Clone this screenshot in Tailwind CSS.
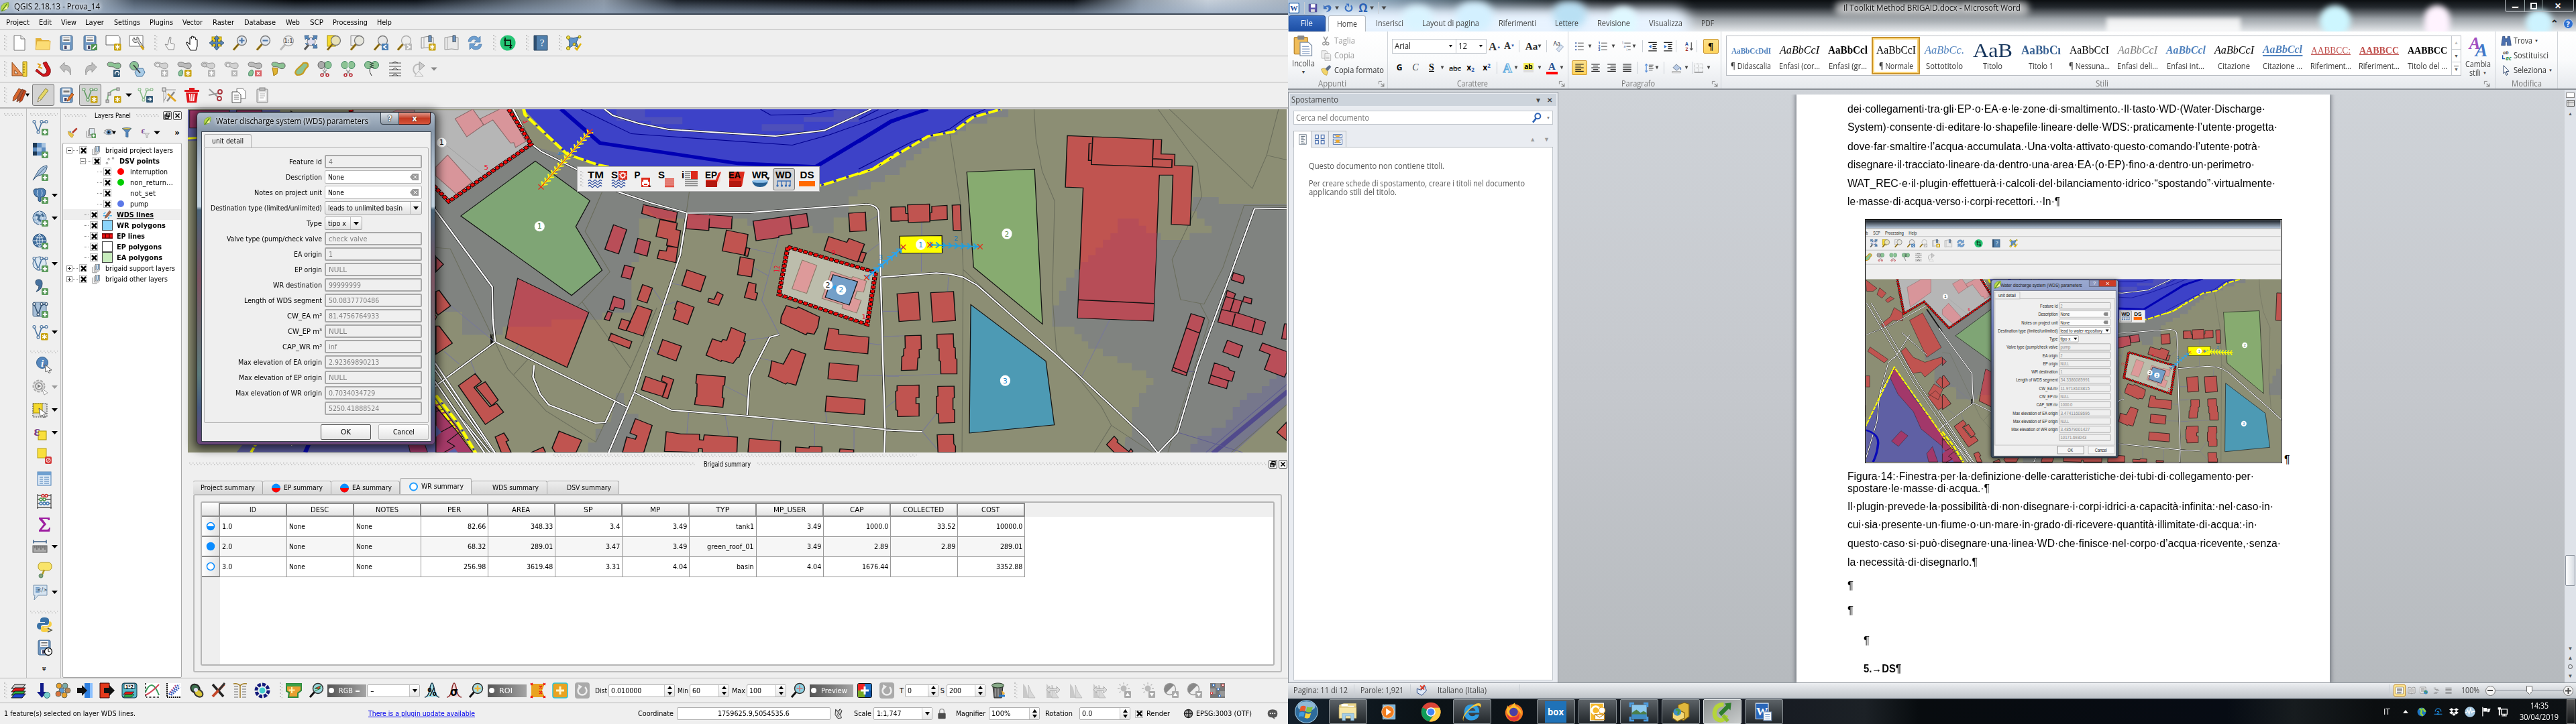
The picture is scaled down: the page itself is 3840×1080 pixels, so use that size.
<!DOCTYPE html>
<html lang="it">
<head>
<meta charset="utf-8">
<title>Desktop</title>
<script src="https://cdn.jsdelivr.net/npm/@tailwindcss/browser@4"></script>
</head>
<body class="w-[3840px] h-[1080px] overflow-hidden flex bg-[#efefef] text-black font-['DejaVu_Sans_Condensed','DejaVu_Sans',sans-serif] font-stretch-condensed text-[11px] leading-none whitespace-nowrap">

<!-- QGIS window -->
<div class="w-[1920px] h-[1080px] shrink-0 flex flex-col bg-[#efefef] overflow-hidden">
  <div class="h-[22px] shrink-0 border-b-2 border-[#3b4654] bg-[linear-gradient(90deg,#b9c5d2_0,#aebccb_130px,#4c5968_200px,#05080b_440px,#0b1016_620px,#5c6773_780px,#8b97a5_900px,#1c222a_1010px,#07090c_1300px,#0b0f14_1600px,#8e9aa7_1700px,#c7d0da_1800px,#a9b4c0_1920px)] relative">
    <div class="absolute inset-0 bg-[linear-gradient(180deg,transparent_0,rgba(150,170,195,.65)_100%)]"></div>
    <div class="relative flex items-center h-full" data-strip="q-title"></div>
  </div>
  <div class="h-[23px] shrink-0 border-b border-[#b5b5b5] flex items-center" data-strip="q-menu"></div>
  <div class="h-[39px] shrink-0 border-b border-[#b5b5b5] flex items-center" data-strip="q-tb1"></div>
  <div class="h-[39px] shrink-0 border-b border-[#b5b5b5] flex items-center" data-strip="q-tb2"></div>
  <div class="h-[39px] shrink-0 border-b-2 border-[#b5b5b5] flex items-center" data-strip="q-tb3"></div>
  <div class="h-[849px] shrink-0 flex">
    <div class="w-[40px] shrink-0 border-r border-[#bdbdbd] pt-[6px] pl-[6px]"><div class="w-[28px] h-[6px] dots"></div></div>
    <div class="w-[51px] shrink-0 border-r border-[#bdbdbd] flex flex-col" id="vbar"></div>
    <!-- layers panel -->
    <div class="w-[189px] shrink-0 flex flex-col pl-[2px]">
      <div class="h-[20px] flex items-center" data-strip="lp-title"></div>
      <div class="h-[31px] flex items-center" data-strip="lp-tools"></div>
      <div class="w-[178px] h-[798px] bg-white border border-[#a9a9a9] rounded-[2px] pt-[2px]" id="tree"></div>
    </div>
    <!-- map and summary -->
    <div class="w-[1640px] shrink-0 flex flex-col">
      <div class="h-[515px] pt-[1px] relative">
        <svg class="block w-[1638px] h-[512px]" viewBox="280 164 1638 512" id="mapsvg"></svg>
        <div class="absolute left-[580px] top-[86px] w-[362px] h-[38px] bg-[#efefef] border border-[#aaa] flex items-center" data-strip="float"></div>
        <!-- dialog -->
        <div class="absolute left-[13px] top-[5px] w-[356px] h-[497px] rounded-[6px] border border-[#20262e] shadow-[0_2px_14px_4px_rgba(0,0,0,.65)] bg-[linear-gradient(180deg,#aebccb_0,#8797a9_26px,#b9c6d3_90px,#c3d3e0_140px,#4c6579_145px,#7c5562_250px,#5c7c7c_390px,#475a80_440px,#6a4678_100%)] px-[6px] flex flex-col">
          <div class="h-[28px] shrink-0 flex items-start relative rounded-t-[5px]" data-strip="dlg-title"></div>
          <div class="h-[463px] w-[343px] bg-[#efefef] border border-[#39424c] pt-[3px] px-[3px]">
            <div class="w-[71px] h-[20px] border border-b-0 border-[#b2b2b2] rounded-t-[3px] flex items-center justify-center"><span data-w="47">unit detail</span></div>
            <div class="w-[335px] h-[411px] border border-[#b2b2b2] rounded-[2px] pt-[10px] flex flex-col gap-[3px]" id="dlgrows"></div>
            <div class="flex justify-end gap-[11px] pt-[2px]">
              <div class="w-[75px] h-[23px] rounded-[2px] border border-[#555] bg-gradient-to-b from-white to-[#e4e4e4] flex items-center justify-center"><span data-w="15">OK</span></div>
              <div class="w-[75px] h-[23px] rounded-[2px] border border-[#b5b5b5] bg-gradient-to-b from-white to-[#e4e4e4] flex items-center justify-center"><span data-w="32">Cancel</span></div>
            </div>
          </div>
        </div>
      </div>
      <div class="h-[6px] flex pl-[545px]"><div class="w-[542px] h-[5px] dots"></div></div>
      <div class="h-[18px] flex items-center" data-strip="bs-title"></div>
      <div class="h-[36px] pl-[8px] pt-[10px] flex items-end" data-tabs></div>
      <div class="ml-[8px] w-[1623px] h-[266px] border-2 border-[#bcbcbc] rounded-[3px] pt-[9px] pl-[9px]">
        <div class="w-[1601px] h-[245px] border-2 border-[#b5b5b5] rounded-[3px] bg-white" id="table"></div>
      </div>
    </div>
  </div>
  <div class="h-[38px] shrink-0 border-y border-[#b5b5b5] flex items-center" data-strip="q-bottom"></div>
  <div class="h-[31px] shrink-0 flex items-center" data-strip="q-status"></div>
</div>

<!-- Word window and taskbar -->
<div class="w-[1920px] h-[1080px] shrink-0 flex flex-col font-['Open_Sans','Noto_Sans',sans-serif] font-stretch-normal text-[12px] text-[#444]">
  <div class="h-[47px] shrink-0 relative overflow-hidden bg-[linear-gradient(180deg,#0b0e11_0,#23282d_22%,#9da3a8_60%,#e6e9ec_100%)]">
    <div class="absolute left-0 top-0 w-[470px] h-[47px] bg-[linear-gradient(90deg,#aec3dc_0,#8ba6bd_120px,rgba(120,150,170,.4)_300px,transparent)]"></div>
    <div class="absolute left-[40px] top-[12px] w-[560px] h-[50px] rounded-full bg-[#e8f3ff] blur-[9px]"></div>
    <div class="absolute left-[250px] top-[2px] w-[56px] h-[46px] rounded-full bg-[#d3f0ff] blur-[6px]"></div>
    <div class="absolute left-[395px] top-[2px] w-[50px] h-[40px] rounded-full bg-[#b9e0f4] blur-[6px]"></div>
    <div class="absolute left-[170px] top-[8px] w-[46px] h-[40px] rounded-full bg-[#d9f4ff] blur-[6px]"></div>
    <div class="absolute left-[480px] top-[10px] w-[40px] h-[46px] rounded-full bg-[#dff8ff] blur-[5px]"></div>
    <div class="absolute left-[815px] top-[2px] w-[290px] h-[21px] rounded-full bg-white/60 blur-[5px]"></div>
    <div class="absolute left-[1538px] top-[8px] w-[46px] h-[46px] rounded-full bg-[#cdf6ff] blur-[4px]"></div>
    <div class="absolute left-[1694px] top-[8px] w-[38px] h-[50px] rounded-full bg-[#fff3ff] blur-[4px]"></div>
    <div class="absolute left-[1845px] top-[14px] w-[40px] h-[40px] rounded-full bg-[#cdf3ff] blur-[4px]"></div>
    <div class="absolute left-[1220px] top-[27px] w-[200px] h-[22px] bg-white/80 blur-[3px]"></div>
    <div class="relative h-[23px] flex items-center" data-strip="w-title"></div>
    <div class="relative h-[24px] flex items-center" data-strip="w-tabs"></div>
  </div>
  <!-- ribbon -->
  <div class="h-[87px] shrink-0 bg-gradient-to-b from-white via-[#fafbfc] to-[#e6e9ed] border-b-2 border-[#8b9097] flex">
    <div class="w-[149px] border-r border-[#cfd3d8] flex flex-col">
      <div class="flex h-[71px]">
        <div class="w-[46px] flex flex-col items-center pt-[6px]"><i data-i="paste" data-s="30"></i><span class="mt-[6px]" data-w="34">Incolla</span><span class="text-[7px] mt-[3px]">▼</span></div>
        <div class="flex flex-col pt-[3px] text-[#999]">
          <div class="h-[22px] flex items-center gap-[6px] pl-[3px]"><i data-i="wcut" data-s="14"></i><span data-w="31">Taglia</span></div>
          <div class="h-[22px] flex items-center gap-[4px] pl-[3px]"><i data-i="wcopy" data-s="16"></i><span data-w="30">Copia</span></div>
          <div class="h-[22px] flex items-center gap-[4px] pl-[3px] text-[#333]"><i data-i="wbrush" data-s="16"></i><span data-w="74">Copia formato</span></div>
        </div>
      </div>
      <div class="flex items-center h-[14px] text-[#777]"><span class="ml-[45px] flex"><span data-w="42">Appunti</span></span><i class="ml-[48px]" data-i="launch" data-s="9"></i></div>
    </div>
    <div class="w-[269px] border-r border-[#cfd3d8] flex flex-col">
      <div class="h-[37px] pt-[7px] flex items-center" data-strip="w-f1"></div>
      <div class="h-[34px] flex items-center" data-strip="w-f2"></div>
      <div class="flex items-center h-[14px] text-[#777]"><span class="ml-[103px] flex"><span data-w="46">Carattere</span></span><i class="ml-[106px]" data-i="launch" data-s="9"></i></div>
    </div>
    <div class="w-[228px] border-r border-[#cfd3d8] flex flex-col">
      <div class="h-[37px] pt-[7px] flex items-center" data-strip="w-p1"></div>
      <div class="h-[34px] flex items-center" data-strip="w-p2"></div>
      <div class="flex items-center h-[14px] text-[#777]"><span class="ml-[79px] flex"><span data-w="50">Paragrafo</span></span><i class="ml-[85px]" data-i="launch" data-s="9"></i></div>
    </div>
    <div class="w-[1154px] border-r border-[#cfd3d8] flex flex-col">
      <div class="h-[71px] flex pt-[6px] pl-[7px]">
        <div class="w-[1096px] h-[60px] border border-[#b9bdc3] bg-white flex" id="styles"></div>
        <div class="w-[50px] flex flex-col items-center pt-[1px]"><i data-i="bigaa" data-s="30"></i><span class="mt-[6px]" data-w="38">Cambia</span><span class="mt-[1px] flex items-center gap-[3px]"><span data-w="17">stili</span><span class="text-[6px]">▼</span></span></div>
      </div>
      <div class="flex items-center h-[14px] text-[#777]"><span class="ml-[558px] flex"><span data-w="19">Stili</span></span><i class="ml-[560px]" data-i="launch" data-s="9"></i></div>
    </div>
    <div class="w-[93px] border-r border-[#cfd3d8] flex flex-col">
      <div class="h-[71px] pt-[3px] pl-[8px] flex flex-col text-[#333]">
        <div class="h-[22px] flex items-center gap-[3px]"><i data-i="binoc" data-s="16"></i><span data-w="28">Trova</span><span class="text-[6px]">▼</span></div>
        <div class="h-[22px] flex items-center gap-[3px]"><i data-i="repl" data-s="16"></i><span data-w="52">Sostituisci</span></div>
        <div class="h-[22px] flex items-center gap-[3px]"><i data-i="cursor" data-s="16"></i><span data-w="49">Seleziona</span><span class="text-[6px]">▼</span></div>
      </div>
      <div class="flex items-center h-[14px] text-[#777]"><span class="ml-[24px] flex"><span data-w="45">Modifica</span></span></div>
    </div>
  </div>
  <!-- workspace -->
  <div class="h-[884px] shrink-0 flex bg-gradient-to-b from-[#cfd3d8] via-[#c5c8cd] to-[#b6babe]">
    <div class="w-[403px] h-[882px] mt-[3px] bg-[#e9ecf1] border border-[#8e939a] flex flex-col px-[7px] pb-[3px]">
      <div class="-mx-[5px] h-[18px] mt-[2px] bg-[#cdd4dc] flex items-center justify-between px-[2px] shrink-0"><span data-w="70">Spostamento</span><span class="text-[10px] flex gap-[8px] pr-[4px]"><b>▼</b><b>✕</b></span></div>
      <div class="h-[21px] mt-[7px] bg-white border border-[#c3c8ce] flex items-center px-[3px] shrink-0 text-[#777]"><span data-w="109">Cerca nel documento</span><i class="ml-auto" data-i="wsearch" data-s="16"></i><span class="text-[6px] ml-[6px]">▼</span></div>
      <div class="flex mt-[9px] h-[25px] shrink-0">
        <div class="w-[27px] bg-white border border-b-0 border-[#b5bac0] flex items-center justify-center"><i data-i="n1" data-s="16"></i></div>
        <div class="w-[26px] border border-l-0 border-[#b5bac0] flex items-center justify-center"><i data-i="n2" data-s="16"></i></div>
        <div class="w-[26px] border border-l-0 border-[#b5bac0] flex items-center justify-center"><i data-i="n3" data-s="16"></i></div>
        <div class="flex-1 border-b border-[#b5bac0] flex justify-end items-center gap-[12px] pr-[5px] text-[9px] text-[#999]"><span>▲</span><span>▼</span></div>
      </div>
      <div class="flex-1 bg-white border border-t-0 border-[#c3c8ce] pl-[22px] text-[#555] flex flex-col items-start">
        <div class="pt-[22px]"><span data-w="202">Questo documento non contiene titoli.</span></div>
        <div class="pt-[14px]"><span data-w="322">Per creare schede di spostamento, creare i titoli nel documento</span></div>
        <div class="pt-[1px]"><span data-w="131">applicando stili del titolo.</span></div>
      </div>
    </div>
    <div class="w-[1500px] flex">
      <div class="ml-[355px] mt-[7px] w-[795px] h-[877px] bg-white shadow-[0_0_6px_2px_rgba(70,75,85,.6)] font-['Liberation_Sans',Arial,sans-serif] text-[16px] text-black pl-[76px] flex flex-col [clip-path:inset(0_-10px_0_-10px)]" id="doc"></div>
    </div>
    <div class="w-[17px] bg-[#dfe3e9] flex flex-col items-center justify-between text-[#555]">
      <div class="flex flex-col items-center w-full">
        <div class="h-[8px] w-[13px] mt-[4px] border border-[#888] bg-white"></div>
        <i class="mt-[2px]" data-i="ruler" data-s="12"></i>
        <span class="text-[7px] mt-[6px]">▲</span>
        <div class="w-[15px] h-[46px] mt-[655px] border border-[#8e959f] rounded-[2px] bg-gradient-to-r from-white to-[#d6dbe2]"></div>
      </div>
      <div class="flex flex-col items-center gap-[6px] pb-[6px] text-[8px]"><span>▼</span><span>▲</span><span class="size-[7px] rounded-full border border-[#555]"></span><span>▼</span></div>
    </div>
  </div>
  <div class="h-[23px] shrink-0 border-t border-[#8f959c] bg-gradient-to-b from-[#eceef1] to-[#bfc4c9] flex items-center" data-strip="w-status"></div>
  <div class="h-[39px] shrink-0 border-t-2 border-[#7e868e] bg-[linear-gradient(90deg,#14202c_0,#0b1216_200px,#161a22_700px,#1c2126_860px,#080c0f_940px,#070c14_1400px,#171c1f_1500px,#0b0e10_1620px,#0d1114)] flex items-center text-white" data-strip="task"></div>
</div>

<script>
/* ---------- icon drawings, 24 x 24 units ---------- */
const star='<rect x="13" y="13" width="10.500" height="10.500" rx="1.500" fill="#c8a10c"/><path d="M18.200 14.500v7.500M15 16.300l6.500 3.800M21.500 16.300l-6.500 3.800" stroke="#fff" stroke-width="1.500"/>';
const gstar=star.replace('#c8a10c','#b5b5b5');
const plus='<rect x="14" y="14" width="10" height="10" rx="1.500" fill="#5b9a5c"/><path d="M19 15.800v6.400M15.800 19h6.400" stroke="#fff" stroke-width="1.900"/>';
const mag=(f,s)=>`<path d="M9.500 14L2 22.500" stroke="#b58a10" stroke-width="3.400"/><path d="M9.500 14L2 22.500" stroke="#333" stroke-width="1"/><circle cx="14.500" cy="8.500" r="7" fill="${f||'#e9e9e2'}" stroke="${s||'#777'}" stroke-width="1.300"/>`;
const blob=(c,s)=>`<path d="M3 5c0-4 6-4 9-2s10-3 11 3-6 7-9 4-10 1-11-5z" fill="${c}" stroke="${s||'#666'}" stroke-width="1"/>`;
const pen='<path d="M4 22l2-7L16 2l4 3L9 19z" fill="#e5d766" stroke="#8c8440"/><path d="M4 22l2-6 3 3z" fill="#f3e3c0" stroke="#777" stroke-width=".600"/>';
const disk='<rect x="3" y="1" width="18" height="22" rx="2" fill="#6f97c1" stroke="#47698d"/><rect x="6" y="2" width="12" height="9" fill="#f2f2f2"/><path d="M7.500 4.500h9M7.500 6.500h9M7.500 8.500h9" stroke="#777"/><rect x="7" y="15" width="10" height="7" fill="#eee"/><rect x="9" y="16" width="3.500" height="5" fill="#446"/>';
const vv=c=>`<path d="M3 4l6 15 5-14 5-1" fill="none" stroke="${c}" stroke-width="1.600"/><g fill="#eee" stroke="${c}" stroke-width="1.100"><circle cx="3" cy="3.500" r="2"/><circle cx="9" cy="19" r="2"/><circle cx="14" cy="3.500" r="2"/><circle cx="21" cy="3.500" r="2"/></g>`;
const sciss='<path d="M9 13l6 7M15 13l-6 7" stroke="#999" stroke-width="1.400"/><circle cx="8" cy="21" r="2" fill="none" stroke="#b5222c" stroke-width="1.500"/><circle cx="16" cy="21" r="2" fill="none" stroke="#b5222c" stroke-width="1.500"/>';
const tx=(s,x,y,z,c,e)=>`<text x="${x}" y="${y}" font-size="${z}" fill="${c||'#000'}" text-anchor="middle" ${e||''}>${s}</text>`;
const lines=(ws,x,al)=>ws.map((w,i)=>{const l=al=='r'?22-w:al=='c'?12-w/2:x;return `<path d="M${l} ${3+i*4.200}h${w}" stroke="#222" stroke-width="1.900"/>`}).join('');
const globe=c=>`<circle cx="11" cy="11" r="10" fill="${c}" stroke="#3a5f86"/><path d="M1 11h20M11 1v20M4 5q7 4 14 0M4 17q7-4 14 0M11 1q-9 10 0 20M11 1q9 10 0 20" fill="none" stroke="#dce8f2" stroke-width="1"/>`;
const hist='<path d="M2 23V2q5 4 6 12t4 9z" fill="#c9c9c9"/><path d="M10 23V4q3 10 10 19z" fill="#d8d8d8" stroke="#aaa" stroke-width=".600"/>';
const arr2='<path d="M2 11l5-5v3.500h10V6l5 5-5 5v-3.500H7V16z" fill="#ddd" stroke="#999" stroke-width=".800"/>';
const dbadge=u=>`<rect x="13" y="13" width="10" height="10" rx="1" fill="#aaa"/><path d="${u?'M18 15l3 5h-6z':'M18 21l3-5h-6z'}" fill="#fff"/>`;
const sun='<circle cx="12" cy="9" r="4.500" fill="#bbb"/><path d="M12 0v3M3 9h3M18 9h3M5.500 2.500l2 2M18.500 2.500l-2 2M5.500 15.500l2-2" stroke="#bbb" stroke-width="1.300"/>';
const contr='<circle cx="10" cy="10" r="8.500" fill="#eee" stroke="#999" stroke-width="1.500"/><path d="M4 16a8.500 8.500 0 0 1 12-12z" fill="#888"/>';
const waves='<path d="M1 15q2-3 4 0t4 0 4 0 4 0 4 0M1 19q2-3 4 0t4 0 4 0 4 0 4 0M1 23q2-3 4 0t4 0 4 0 4 0 4 0" fill="none" stroke="#28489c" stroke-width="1.300"/>';
const lab=(s,x,l)=>`<text x="${x||12}" y="11" font-size="14" font-weight="bold" text-anchor="middle" textLength="${l}" lengthAdjust="spacingAndGlyphs" font-family="Liberation Sans,Arial,sans-serif">${s}</text>`;
const I={
leaf:'<path d="M3 22C0 10 6 2 20 1c3 10-3 18-13 20z" fill="#b8d94a" stroke="#5d8a1c"/><path d="M4 22L17 4" stroke="#4a7a1a" stroke-width="2"/><path d="M9 18l8-9 1 7z" fill="#fff8b0"/>',
neu:'<path d="M4 1h10l6 5v17H4z" fill="#fff" stroke="#777"/><path d="M14 1v5h6" fill="#eee" stroke="#777"/>',
open:'<path d="M1 5h8l2 3h10v14H1z" fill="#e3b23a"/><path d="M3 9h20l-1 13H1z" fill="#fbdc74" stroke="#d9a62e" stroke-width=".800"/>',
save:disk,saveas:disk+'<path d="M14 14h9v9h-9z" fill="#4f9350"/><path d="M16 21l5-5" stroke="#fff" stroke-width="2"/>',
comp:'<path d="M1 1h18l3 3v11H1z" fill="#fff" stroke="#666"/>'+star,
compm:'<path d="M1 1h20v16H1z" fill="#fff" stroke="#777"/><path d="M8 4a4 4 0 1 0 5 6l7 11 3-2-8-11a4 4 0 0 0-3-5l0 4-3 0z" fill="#ddd" stroke="#555"/><path d="M18 16l4 6" stroke="#d8a512" stroke-width="3"/>',
touch:'<path d="M10 22l-5-8 4 1 3-12 2 1-1 8 6 2-1 8z" fill="#f4f4f4" stroke="#888"/>',
pan:'<path d="M8 23L2 13q-1-2 1-2l4 3V5q1-2 2.500 0V3q1-2 3 0v1q2-2 3 1v2q2-1 2.500 1v9l-2 6z" fill="#fff" stroke="#222" stroke-width="1.200"/>',
panto:'<rect x="5" y="3" width="14" height="14" fill="#f2cf1d" stroke="#a98d00"/><path d="M12 1l4 5h-2.500v4.500H18V8l5 4-5 4v-2.500h-4.500V18H16l-4 5-4-5h2.500v-4.500H6V16l-5-4 5-4v2.500h4.500V6H8z" fill="#5a86b8" stroke="#24466c" stroke-width=".800"/>',
zin:mag('#e3e8ee')+'<path d="M14.500 4.500v8M10.500 8.500h8" stroke="#4d78ac" stroke-width="2.200"/>',
zout:mag('#e3e8ee')+'<path d="M10.500 8.500h8" stroke="#4d78ac" stroke-width="2.200"/>',
z11:'<path d="M9.500 14L2 22.500" stroke="#bbb" stroke-width="3"/><circle cx="14" cy="9" r="7.500" fill="#eee" stroke="#aaa" stroke-width="1.300"/>'+tx('1:1',14,12,8,'#666','font-weight="bold"'),
zfull:'<path d="M9 15L3 22" stroke="#555" stroke-width="3"/><circle cx="13" cy="10" r="6" fill="#dde" stroke="#777"/><path d="M3 1h7L8 3l3 3-2 2-3-3-2 2zM22 1h-7l2 2-3 3 2 2 3-3 2 2zM22 20h-7l2-2-3-3 2-2 3 3 2-2zM4 12l2 3 3-2" fill="#5585b8" stroke="#2c5078" stroke-width=".700"/>',
zsel:'<rect x="2" y="1" width="12" height="16" fill="#f5d92c" stroke="#a58f00"/>'+mag('#e8e2b8'),
zlay:'<path d="M2 1h13v15H2z" fill="#eee" stroke="#888"/>'+mag('#e6e6dd'),
zprev:mag('#e6e6e6')+'<rect x="13" y="13" width="10" height="10" fill="#4a7fb5"/><path d="M20 15l-4 3 4 3" stroke="#fff" stroke-width="1.800" fill="none"/>',
znext:mag('#eee','#aaa')+'<rect x="13" y="13" width="10" height="10" fill="#bbb"/><path d="M16 15l4 3-4 3" stroke="#fff" stroke-width="1.800" fill="none"/>',
bknew:'<path d="M2 4q9-3 18 0v16q-9-2-18 0z" fill="#eee" stroke="#888"/><path d="M6 3v17" stroke="#aaa"/><path d="M13 1h4v10l-2-2-2 2z" fill="#6d95c4" stroke="#345"/>'+star,
bk:'<path d="M2 4q10-3 20 0v18q-10-2-20 0z" fill="#e9e9e9" stroke="#999"/><path d="M6 3v18" stroke="#aaa"/><path d="M14 1h4v10l-2-2-2 2z" fill="#6d95c4" stroke="#345"/>',
refresh:'<path d="M2 10Q3 2 11 2q4 0 6 3l3-3v9h-9l3-3q-5-4-8 2z" fill="#6e9fd0" stroke="#4572a4" stroke-width=".700"/><path d="M22 14q-1 8-9 8-4 0-6-3l-3 3v-9h9l-3 3q5 4 8-2z" fill="#6e9fd0" stroke="#4572a4" stroke-width=".700"/>',
crop:'<circle cx="12" cy="12" r="11.500" fill="#25c574"/><path d="M8 4v12h9M6 8h10v10" stroke="#0a2b16" stroke-width="2" fill="none"/><path d="M19 16l-3-2v4zM16 21l-2-3h4z"/>',
help:'<path d="M2 1h20v22H2z" fill="#5180ad" stroke="#27435f"/><path d="M2 1h4v22H2z" fill="#2f4f70"/>'+tx('?',14,17,15,'#fff','font-family="Liberation Serif,serif"'),
cad:'<path d="M4 4l8 1 8-2-4 8 3 8-7-4-7 5 1-8z" fill="#5f93c9" stroke="#2f5780"/><g fill="#f2e04a" stroke="#8b7a00"><circle cx="4" cy="4" r="2.500"/><circle cx="21" cy="3" r="2"/><circle cx="4" cy="20" r="2.500"/><circle cx="13" cy="14" r="2"/></g><path d="M14 19l3 3 6-9" stroke="#e2b400" stroke-width="2.500" fill="none"/>',
tri:'<path d="M1 2v20h17z" fill="#e68e52" stroke="#8f4a1c"/><path d="M5 13v6h5z" fill="#efefef" stroke="#8f4a1c"/><path d="M17 1h6v22h-6z" fill="#f4d33f" stroke="#9d8412"/><path d="M17 5h3M17 9h3M17 13h3M17 17h3" stroke="#7c6a10"/>',
magnet:'<path d="M3 12l8 7q6 2 7-5L12 3l5-2 6 11q2 12-11 11L1 15z" fill="#d2161c" stroke="#7d0a0d"/><path d="M4 4l4 2-2 3 5 2" stroke="#e2a21d" stroke-width="2" fill="none"/>',
undo:'<path d="M2 9l7-7v4q12 0 9 15-1-8-9-8v4z" fill="#bdbdbd" stroke="#9c9c9c"/>',
redo:'<path d="M22 9l-7-7v4Q3 6 6 21q1-8 9-8v4z" fill="#bdbdbd" stroke="#9c9c9c"/>',
e1:blob('#8cc394')+'<rect x="12" y="13" width="10" height="11" rx="1" fill="#345b78"/><path d="M15 20a3 3 0 1 1 4 1" stroke="#fff" stroke-width="1.500" fill="none"/>',
e2:'<circle cx="8" cy="7" r="6.500" fill="#8cc394" stroke="#567"/><path d="M13 11h8l3 6-4 6h-8l-3-6z" fill="#a8cbe6" stroke="#47759e"/><path d="M7 6l10 12" stroke="#333" stroke-width="1.500"/>',
e3:blob('#d2d2d2','#999')+'<circle cx="8" cy="6" r="3" fill="#efefef" stroke="#999"/>'+gstar,
e4:blob('#bbb','#777')+'<path d="M5 22q-3-7 4-9 3 3 0 9z" fill="#8cc394" stroke="#486"/>'+star,
e5:blob('#d2d2d2','#999')+'<circle cx="8" cy="6" r="3" fill="#ccc" stroke="#999"/>'+gstar,
e6:blob('#d2d2d2','#999')+'<circle cx="8" cy="6" r="3" fill="#efefef" stroke="#999"/><rect x="13" y="14" width="9" height="9" fill="#b5b5b5"/><path d="M15.500 16.500l4 4M19.500 16.500l-4 4" stroke="#fff" stroke-width="1.500"/>',
e7:blob('#bbb','#777')+'<path d="M4 22q-2-7 5-9 3 3 0 9z" fill="#8cc394" stroke="#486"/><rect x="13" y="14" width="10" height="9" fill="#d9666a"/><path d="M16 16.500l4 4M20 16.500l-4 4" stroke="#fff" stroke-width="1.500"/>',
e8:blob('#8cc394')+'<path d="M4 10l8 1-1 8-5 3z" fill="#e0b434" stroke="#a67d12"/>',
e9:'<path d="M6 21q-6-4 1-10t8-8q8-2 7 5-4 3-6 8t-10 5z" fill="#8cc394" stroke="#c89a20" stroke-width="2.200"/>',
e10:'<ellipse cx="7" cy="6" rx="5" ry="5.500" fill="#aaa" stroke="#666"/><ellipse cx="17" cy="6" rx="5" ry="5.500" fill="#8cc394" stroke="#486"/><path d="M12 1v12" stroke="#666"/>'+sciss,
e11:'<ellipse cx="7" cy="6" rx="5" ry="5.500" fill="#8cc394" stroke="#486"/><ellipse cx="17" cy="6" rx="5" ry="5.500" fill="#8cc394" stroke="#486"/><path d="M12 1v12" stroke="#fff"/>'+sciss,
e12:'<ellipse cx="7" cy="6" rx="5.500" ry="5.500" fill="#8cc394" stroke="#486"/><ellipse cx="17" cy="6" rx="5.500" ry="5.500" fill="#8cc394" stroke="#486"/><path d="M9 2l6 2M9 5l6 2M9 8l6 2M12 9q-6 3 0 13" stroke="#333" fill="none"/>',
e13:'<path d="M3 3h18M3 8h18M3 13h18M3 18h18M3 22h18" stroke="#888" stroke-width="1.300"/><path d="M8 3l4-2 4 2M8 13l4-3 4 3M8 22l4-3 4 3" stroke="#333" fill="none"/>',
e14:'<path d="M10 21Q2 16 5 9q3-5 9-4" fill="none" stroke="#bbb" stroke-width="2"/><path d="M13 1l8 6-8 7z" fill="#ccc" stroke="#999"/><path d="M12 15l7 8H6z" fill="#eee" stroke="#bbb"/>',
pens:'<g stroke="#6b2f17" stroke-width=".800"><path d="M2 21l1-6L11 2l4 2-8 14z" fill="#d9662c"/><path d="M8 22l1-6 7-13 4 2-7 14z" fill="#a6563a"/><path d="M12 23l1-6 6-13 3 2-6 14z" fill="#c8471c"/></g>',
pen,savee:disk+'<path d="M13 21l2-5 5-7 3 2-6 8z" fill="#e57a2c" stroke="#9a4713"/>',
addf:vv('#5f9b60')+star,
curve:'<path d="M3 21Q3 4 18 3" fill="none" stroke="#86b986" stroke-width="2"/><g fill="#ccc" stroke="#777"><rect x="1" y="19" width="4" height="4"/><rect x="4" y="8" width="4" height="4"/><rect x="17" y="1" width="4" height="4"/></g>'+star,
movef:vv('#86b986')+'<rect x="13" y="13" width="10" height="10" rx="1" fill="#345b78"/><path d="M15 18h5M18 15.500l2.500 2.500-2.500 2.500" stroke="#fff" stroke-width="1.500" fill="none"/>',
node:'<path d="M4 3v20M4 4h18M6 5q4 8-2 16" stroke="#999" fill="none"/><rect x="2" y="1" width="5" height="5" fill="#ddd" stroke="#777"/><path d="M9 21L20 7" stroke="#888" stroke-width="2.500"/><path d="M10 10l12 11" stroke="#e2a724" stroke-width="3"/>',
trash:'<path d="M3 8h18l-2 15H5z" fill="#e0161b"/><path d="M1 4h22v3H1zM8 1h8v3H8z" fill="#e0161b"/><path d="M8.500 10l1 11M12 10v11M15.500 10l-1 11" stroke="#fff" stroke-width="1.700"/>',
cut:'<path d="M3 3l13 12M2 12l15-3" stroke="#999" stroke-width="2"/><circle cx="19" cy="7" r="3" fill="none" stroke="#a8343c" stroke-width="1.800"/><circle cx="18" cy="17" r="3" fill="none" stroke="#a8343c" stroke-width="1.800"/>',
copy:'<path d="M9 2h9l4 4v11H9z" fill="#fff" stroke="#777"/><path d="M2 7h9l4 4v12H2z" fill="#fff" stroke="#555"/><path d="M5 12h7M5 15h7M5 18h7" stroke="#777"/>',
pas:'<rect x="4" y="3" width="16" height="20" rx="1" fill="#ddd" stroke="#888"/><rect x="8" y="1" width="8" height="4" fill="#bbb" stroke="#888"/><path d="M7 8h10v12H7z" fill="#fff"/><path d="M8 10h8M8 13h8M8 16h6" stroke="#aaa"/>',
v1:vv('#47729f')+plus,
v2:'<path d="M1 1h19v19H1z" fill="#1e3a56"/><path d="M7 1h7v7H7zM1 8h6v6H1zM14 8h6v6h-6zM7 14h7v6H7z" fill="#5d8cc0"/><path d="M14 1h6v7h-6zM7 8h7v6H7z" fill="#a9c4e0"/>'+plus,
v3:'<path d="M1 23L9 9Q15 1 22 1q1 6-6 13l-9 3z" fill="#a9c3dd" stroke="#3a5a7b"/><path d="M2 22L20 3" stroke="#3a5a7b"/>'+plus,
v4:'<path d="M2 5q0-4 6-3 8-3 12 2 1 6-3 10l-4 0v6q-3 2-4-1v-5Q3 14 2 5z" fill="#4d7fb3" stroke="#24466a"/><path d="M8 3q-2 6 1 10M14 3q2 5 0 10" stroke="#cde" fill="none"/>'+plus,
v5:globe('#9fbcd8')+'<path d="M5 6l6 2-2 5 4 3M14 5l3 4" stroke="#456c92" stroke-width="3" fill="none"/>'+plus,v6:globe('#3e6c9c')+plus,v7:'<circle cx="11" cy="11" r="10" fill="#dce8f2" stroke="#3a5f86"/>'+vv('#47729f')+plus,
v8:'<path d="M5 5q0-4 5-4t5 6q0 9-9 12 5-5 4-9-5 0-5-5z" fill="#47729f" stroke="#2b4a6b"/>'+plus,
v9:'<rect x="1" y="1" width="20" height="21" rx="2" fill="#a8c0d8" stroke="#54708d"/>'+vv('#33506f')+plus,
v10:vv('#47729f')+star,
info:'<circle cx="9" cy="9" r="8.500" fill="#5687bd" stroke="#35618f"/>'+tx('i',9,15,15,'#fff','font-style="italic" font-weight="bold" font-family="Liberation Serif,serif"')+'<path d="M13 12l10 8-4 .500 2 3-2 1-2-3.500-3 2z" fill="#fff" stroke="#333" stroke-width=".800"/>',
gear:'<circle cx="10" cy="10" r="8.500" fill="#ddd" stroke="#aaa" stroke-width="2" stroke-dasharray="4 2"/><circle cx="10" cy="10" r="5" fill="#eee" stroke="#888" stroke-width="1.500"/><path d="M8 7l5 3-5 3z" fill="#777"/><path d="M14 13l9 7-5 3z" fill="#fff" stroke="#999"/>',
sel:'<rect x="1" y="2" width="21" height="20" fill="#ddd" stroke="#333" stroke-dasharray="2 1.500"/><rect x="2" y="2" width="13" height="14" fill="#f5d92c" stroke="#a58f00"/><path d="M10 9l11 8-4 1 2 4-2 1-2-4-3 2z" fill="#fff" stroke="#333" stroke-width=".800"/>',
eps:'<rect x="9" y="9" width="12" height="13" fill="#f9df3c" stroke="#a58f00"/>'+tx('ε',7,16,21,'#7b3f88','font-family="Liberation Serif,serif" font-weight="bold"'),
desel:'<rect x="2" y="1" width="13" height="14" fill="#f9df3c" stroke="#b89f10"/><rect x="13" y="13" width="10" height="11" rx="2" fill="#d43a3a"/><circle cx="18" cy="18.500" r="3" fill="none" stroke="#fff"/><path d="M16 20.500l4-4" stroke="#fff"/>',
tab:'<rect x="2" y="2" width="20" height="20" fill="#dce9f6" stroke="#4a7fb5"/><path d="M2 2h20v5H2z" fill="#6fa0d0"/><path d="M5 10h5M12 10h7M5 13h5M12 13h7M5 16h5M12 16h7M5 19h5M12 19h7" stroke="#4a7fb5"/>',
abac:'<path d="M2 1v22M22 1v22M2 3h20M2 9h20M2 15h20M1 21h22" stroke="#555" stroke-width="1.300" fill="none"/><g fill="#efefef" stroke-width="1.400"><g stroke="#c22"><circle cx="10" cy="3.500" r="2"/><circle cx="15" cy="3.500" r="2"/></g><g stroke="#4a9a4a"><circle cx="7" cy="9" r="2"/><circle cx="12" cy="9" r="2"/></g><g stroke="#4a7fb5"><circle cx="7" cy="15" r="2"/><circle cx="12" cy="15" r="2"/><circle cx="17" cy="15" r="2"/></g></g>',
sigma:'<path d="M4 2h16v4h-2q0-2-3-2H9l6 8-7 8h8q3 0 3-3h2l-1 6H4v-2l7-9-7-8z" fill="#9d1ca0"/>',
meas:'<path d="M2 4h19M2 1.500v5M21 1.500v5" stroke="#3a5f86" stroke-width="1.500"/><rect x="1" y="10" width="21" height="10" fill="#aaa" stroke="#555"/><path d="M4 10v4M7 10v6M10 10v4M13 10v6M16 10v4M19 10v6" stroke="#444"/>',
note:'<rect x="3" y="1" width="20" height="12" rx="5" fill="#f9e46a" stroke="#b39b22"/><path d="M12 12l-3 7" stroke="#b39b22" stroke-width="2.500"/><circle cx="7" cy="21" r="3" fill="#8aa27c" stroke="#586"/>',
html:'<path d="M2 1h20v15H9l-6 7 1-7H2z" fill="#d6e4f1" stroke="#7692ad"/><path d="M5 5h6M5 8h6M5 11h6" stroke="#4a7fb5" stroke-width="1.600"/>'+tx('&lt;/&gt;',15,11,8,'#234'),
py:'<path d="M12 1q-6 0-6 4v3h7v1H4q-3 1-3 5t4 5h2v-4q0-3 4-3h5q3 0 3-4V5q0-4-7-4z" fill="#3a72a6"/><path d="M12 23q7 0 7-4v-3h-7v-1h8q3 0 3-4t-3-4h-1v4q0 3-4 3h-5q-3 0-3 4v2q0 3 5 3z" fill="#f7cf45"/><path d="M17 17l6 3-6 3" stroke="#554" stroke-width="1.500" fill="none"/>',
dclk:disk+'<circle cx="18" cy="18" r="5.500" fill="#fff" stroke="#000" stroke-width="1.300"/><path d="M18 14v4h3" stroke="#000" fill="none"/>',
broom:'<path d="M12 12L22 2" stroke="#b5382a" stroke-width="4"/><path d="M2 9l7 3 6 5-4 6Q3 19 2 9z" fill="#e9c64b" stroke="#b8862a"/><path d="M4 8l5 1-1 3z" fill="#4d8fc7"/>',
grp:'<path d="M3 8v14h11M7 5v14h11" fill="none" stroke="#777" stroke-width="1.300"/><rect x="10" y="2" width="10" height="14" fill="#dde6ee" stroke="#666"/><path d="M13 4v9q2 3 4 0V2" stroke="#3a6a96" fill="none" stroke-width="1.500"/>',
grpa:'<path d="M3 8v14h11M7 5v14h11" fill="none" stroke="#777" stroke-width="1.300"/><rect x="10" y="2" width="10" height="14" fill="#dde6ee" stroke="#666"/>'+plus,
eye:'<path d="M1 12Q12 2 23 12 12 21 1 12z" fill="#d8e0e8" stroke="#777"/><circle cx="12" cy="11" r="5" fill="#4f7dab"/><circle cx="12" cy="11" r="2"/><path d="M2 8Q12 1 22 8" stroke="#777" fill="none" stroke-width="1.500"/>',
fun:'<path d="M2 2h20l-7 9v11l-5-1V11z" fill="#5687bd" stroke="#2c5680"/><ellipse cx="12" cy="3" rx="10" ry="2" fill="#e7c64b" stroke="#2c5680"/>',
epsf:tx('ε',8,14,20,'#7b3f88','font-family="Liberation Serif,serif" font-weight="bold"')+'<path d="M11 13h11l-4 5v5h-3v-5z" fill="#ddd" stroke="#999"/>',
b1:'<path d="M6 3h16l-5 6H1z" fill="#ccc" stroke="#111"/><path d="M6 8h16l-5 6H1z" fill="#e01b1b" stroke="#111"/><path d="M6 13h16l-5 6H1z" fill="#2fae45" stroke="#111"/><path d="M6 17h16l-5 6H1z" fill="#2046d0" stroke="#111"/>',
b2:'<path d="M9 1h5v13h4l-6.500 9L4 14h5z" fill="#101a8a"/><circle cx="19" cy="19" r="4.500" fill="#7cc" stroke="#377"/>',
b3:'<g stroke="#665"><circle cx="6" cy="5" r="4" fill="#e9a22b"/><circle cx="15" cy="5" r="4" fill="#7aa"/><circle cx="19" cy="12" r="4" fill="#b85"/><circle cx="10" cy="12" r="4" fill="#5b9bd5"/><circle cx="5" cy="17" r="4" fill="#d9733c"/><circle cx="14" cy="19" r="4" fill="#e9a22b"/></g>',
b4:'<path d="M11 1h12v22H11z" fill="#2e7fe0"/><path d="M19 1h4v22h-4z" fill="#8bc0ff"/><path d="M0 8h7V4l8 8-8 8v-4H0z" fill="#111"/>',
b5:'<path d="M1 1h14v22H1z" fill="#e5391b" stroke="#300"/><path d="M7 8h8V4l8 8-8 8v-4H7z" fill="#111"/>',
b6:'<rect x="1" y="1" width="22" height="22" rx="3" fill="#57b8c9" stroke="#134"/><rect x="4" y="2" width="16" height="7" fill="#fff" stroke="#134"/>'+tx('1*2',12,8.500,7,'#000','font-weight="bold"')+'<path d="M6 14h13l-4 4H3z" fill="#e01b1b" stroke="#111" stroke-width=".600"/><path d="M6 18h13l-4 4H3z" fill="#2fae45" stroke="#111" stroke-width=".600"/>',
b7:'<path d="M1 1h22v22H1z" fill="#fff"/><path d="M2 1v21h21" stroke="#333" stroke-dasharray="1 1" stroke-width="2" fill="none"/><path d="M2 14Q12-8 22 19" stroke="#3b9b5a" stroke-width="2" fill="none"/><path d="M2 19Q12 14 22 3" stroke="#d04a5a" stroke-width="2" fill="none"/>',
b8:'<path d="M1 1h22v22H1z" fill="#fff"/><path d="M2 1v21h21" stroke="#111" stroke-dasharray="2 1" stroke-width="2" fill="none"/><path d="M5 18L20 3M8 19L21 7" stroke="#3a5fc0" stroke-width="3" stroke-dasharray="2 1.500"/><path d="M6 15L15 4" stroke="#c34a7a" stroke-width="2" stroke-dasharray="2 2"/>',
b9:'<ellipse cx="10" cy="9" rx="7" ry="6" transform="rotate(35 10 9)" fill="#3d6e4e" stroke="#222" stroke-width="2"/><ellipse cx="15" cy="16" rx="7" ry="5" transform="rotate(35 15 16)" fill="#d9c63a" stroke="#333" stroke-width="2"/><circle cx="11" cy="11" r="3" fill="#dde"/>',
b10:'<path d="M4 3l16 18" stroke="#222" stroke-width="3.500"/><path d="M21 3L4 21" stroke="#c4482a" stroke-width="4"/><path d="M22 1l-9 11" stroke="#333" stroke-width="3"/>',
b11:'<path d="M12 4v19M2 2q7-1 10 3 3-4 10-3" stroke="#a07a20" stroke-width="1.500" fill="none"/><path d="M3 6h6M3 10h6M3 14h6M3 18h6M3 22h6M15 6h6M15 10h6M15 14h6M15 18h6M15 22h6" stroke="#999" stroke-width="1.500"/>',
b12:'<circle cx="12" cy="12" r="9" fill="none" stroke="#131a7c" stroke-width="5" stroke-dasharray="5 2"/><circle cx="12" cy="12" r="5" fill="#4cc" stroke="#e8ffff"/>',
b13:'<path d="M1 2h22v10l-5 4v6H4l1-7-4-2z" fill="#e9a032" stroke="#2c8a3c" stroke-width="2"/><path d="M1 2h22v4H1z" fill="#3aa04a"/><path d="M9 7v9M4.500 11.500h9" stroke="#fff4b0" stroke-width="2"/>',
b14:'<path d="M9 14L2 22" stroke="#111" stroke-width="3"/><circle cx="14" cy="9" r="7.500" fill="#9bd7dc" stroke="#333" stroke-width="1.500"/><path d="M9 9l9-4-2 5zM9 13l9-4" fill="#e33" stroke="#273"/>',
b15:'<path d="M1 22Q7 22 9 8q3-14 6 0 2 14 8 14" fill="#a8e0ea" stroke="#134" stroke-width="1.500"/>'+tx('%',12,20,15,'#000','font-weight="bold"'),
b16:'<path d="M1 22Q7 22 9 8q3-14 6 0 2 14 8 14" fill="#f1dada" stroke="#822" stroke-width="1.500"/>'+tx('σ',12,20,17,'#000','font-weight="bold"'),
b17:'<path d="M9 14L2 22" stroke="#111" stroke-width="3"/><circle cx="14" cy="9" r="7.500" fill="#a8dfe4" stroke="#333" stroke-width="1.500"/><path d="M14 4.500v9M9.500 9h9" stroke="#f2b53c" stroke-width="2.500"/>',
b18:'<path d="M2 2h20l-4 10 4 10H2z" fill="#e9a321"/><g stroke="#e11" stroke-width="1.500"><path d="M1 1l3 3M4 1L1 4M20 1l3 3M23 1l-3 3M1 20l3 3M4 20l-3 3M20 20l3 3M23 20l-3 3M14 5l4 4M18 5l-4 4M14 13l4 4M18 13l-4 4"/></g>',
b19:'<rect x="1" y="1" width="22" height="22" rx="3" fill="#e9a321" stroke="#2bc3d8" stroke-width="1.500"/><path d="M12 6v12M6 12h12" stroke="#fff4c8" stroke-width="3"/>',
b20:'<rect x="1" y="0" width="22" height="24" rx="4" fill="#aaa"/><path d="M16 7a6.500 6.500 0 1 1-8 0" stroke="#eee" stroke-width="2.500" fill="none"/><path d="M6 3l6 3-5 5z" fill="#eee"/>',
b21:'<rect x="1" y="1" width="22" height="22" rx="3" fill="#111"/><path d="M2 2h10v10H2z" fill="#e22"/><path d="M12 2h10v10H12z" fill="#27c"/><path d="M2 12h10v10H2z" fill="#7a2"/><path d="M12 12h10v10H12z" fill="#15a"/><path d="M12 6v12M6 12h12" stroke="#fff" stroke-width="3"/>',
b22:'<path d="M4 6h15l-2 17H6z" fill="#666" stroke="#222"/><ellipse cx="11.500" cy="4.500" rx="9" ry="3.500" fill="#8a8" stroke="#232"/><path d="M8 9v12M12 9v12" stroke="#bbb"/><path d="M17 12l5 4-3 4z" fill="#f2b53c"/><path d="M13 20h9" stroke="#27c" stroke-width="3"/>',
b23:'<path d="M9 14L2 22" stroke="#111" stroke-width="3"/><circle cx="14" cy="9" r="7.500" fill="#8fd3e4" stroke="#333" stroke-width="1.500"/><path d="M14 4.500v9M9.500 9h9" stroke="#c77" stroke-width="1.500"/>',
h1:hist,h2:hist+arr2,h3:hist,h4:hist+arr2,h5:sun+dbadge(1),h6:sun+dbadge(0),h7:contr+dbadge(1),h8:contr+dbadge(0),
h9:'<path d="M1 1h22v22H1z" fill="#777"/><path d="M9 1h7v7H9zM1 9h8v8H1zM15 13h8v8h-8z" fill="#999"/><g fill="#fff" stroke="#37c" stroke-width="1"><circle cx="6" cy="4" r="1.700"/><circle cx="13" cy="10" r="1.700"/><circle cx="15" cy="20" r="1.700"/></g><g fill="#fff" stroke="#d22"><circle cx="20" cy="4" r="1.700"/><circle cx="3" cy="16" r="1.700"/></g>',
mouse:'<path d="M4 2l5 4 5-5 4 4-3 8 2 8-8 1-6-8z" fill="#ddd" stroke="#222" stroke-width="1.300"/><path d="M4 2l10 12M14 1l-8 17M18 5L8 20" stroke="#222"/>',
lock:'<path d="M7 11V6q0-5 5-5t5 5v5" fill="none" stroke="#999" stroke-width="2"/><rect x="3.500" y="10" width="17" height="13" rx="2" fill="#4b4b4b"/>',
proj:'<circle cx="12" cy="12" r="9.500" fill="#bbb" stroke="#222" stroke-width="2.500"/><path d="M2 12h20M12 2v20M12 2q-9 10 0 20M12 2q9 10 0 20" fill="none" stroke="#222" stroke-width="1.500"/>',
msg:'<path d="M12 2q11 0 11 9t-7 9l1 4-6-4Q1 20 1 11t11-9z" fill="#555"/><circle cx="7" cy="11" r="1.500" fill="#fff"/><circle cx="12" cy="11" r="1.500" fill="#fff"/><circle cx="17" cy="11" r="1.500" fill="#fff"/>',
f1:lab('TM',12,24)+waves,f2:lab('S',5,10)+'<rect x="11" y="0" width="13" height="13" fill="#dd2b1c"/><circle cx="17.500" cy="6.500" r="3.300" fill="none" stroke="#fff" stroke-width="1.800"/><circle cx="17.500" cy="6.500" r="5" fill="none" stroke="#fff" stroke-dasharray="1.500 2.400"/>'+waves,
f3:lab('P',4,9)+'<rect x="10" y="10" width="13" height="14" fill="#dd2b1c"/><path d="M13 13h7v3h2v5h-2v2h-7v-2h-2v-5h2z" fill="#fff"/><path d="M14 19h5v2h-5z" fill="#dd2b1c"/><path d="M21 22h4l-2 2z"/>',
f4:lab('S',5,10)+'<path d="M10 12h14M10 15h14M10 18h14M10 21h14M10 23.500h14" stroke="#dd2b1c" stroke-width="1.500"/>',
f5:lab('i',2,4)+'<path d="M5 1h19M5 4h8M5 7h8M5 10h8M5 13h19M5 16h19M5 19h19M5 22h19" stroke="#777" stroke-width="1.700"/><rect x="14" y="0" width="10" height="12" fill="#dd2b1c"/>',
f6:'<path d="M1 17l18 0 5-16-4 2-4 10H1z" fill="#dd2b1c"/><path d="M1 15h17v9H1z" fill="#b3180f"/><path d="M18 17l5-12v10l-5 9z" fill="#f2d9d4"/>'+lab('EP',9,18),
f7:'<path d="M3 1h21l-4 22H1V14z" fill="#dd2b1c"/><path d="M1 15h18v9H1z" fill="#b3180f"/>'+lab('EA',9,18),
f8:lab('WR',12,24)+'<path d="M0 15h24q-2 9-12 9T0 15z" fill="#276092"/><ellipse cx="12" cy="15.500" rx="12" ry="2.300" fill="#8fc1ea"/>',
f9:lab('WD',12,24)+'<path d="M3 22v-7h20M9 22v-7M16 22v-7M22 15v7" stroke="#3b6fb5" fill="none" stroke-width="1.300"/><g fill="#3b6fb5"><circle cx="3" cy="22" r="1.700"/><circle cx="9.500" cy="22" r="1.700"/><circle cx="15.500" cy="22" r="1.700"/><circle cx="21" cy="22" r="1.700"/></g>',
f10:lab('DS',12,21)+'<path d="M0 15h24v8H0z" fill="#ff6a00"/>',
wW:'<rect x="1" y="1" width="22" height="22" rx="2" fill="#fff" stroke="#1e5fae" stroke-width="2"/>'+tx('W',12,18,17,'#1e4f9e','font-weight="bold" font-family="Liberation Serif,serif"'),
wsave:'<path d="M2 2h20v20H4l-2-2z" fill="#5b52ad" stroke="#2f2a73"/><path d="M7 2h11v9H7z" fill="#fff"/><path d="M7 15h10v7H7z" fill="#ddd"/>',
wundo:'<path d="M2 5v9h9l-4-3q8-5 8 2 0 5-6 9 12-2 12-11Q19 1 5 8z" fill="#3b72c4" stroke="#2450a0" stroke-width=".600"/>',
wredo:'<path d="M6 6a9 9 0 1 0 12 0" fill="none" stroke="#3b72c4" stroke-width="4"/><path d="M4 1h9v9z" fill="#3b72c4"/>',
paste:'<rect x="1" y="2" width="16" height="20" rx="1" fill="#f0bd5a" stroke="#b5822c"/><rect x="5" y="0" width="8" height="5" rx="1" fill="#888"/><path d="M8 8h10l4 4v12H8z" fill="#fff" stroke="#7d8fa6"/><path d="M10.500 13h8M10.500 16h9M10.500 19h9M10.500 21.500h9" stroke="#8ca4c8"/>',
wcut:'<path d="M7 1l7 14M17 1l-7 14" stroke="#999" stroke-width="2.500"/><circle cx="8" cy="19" r="3.500" fill="none" stroke="#999" stroke-width="2"/><circle cx="17" cy="19" r="3.500" fill="none" stroke="#999" stroke-width="2"/>',
wcopy:'<path d="M2 1h10l3 3v14H2z" fill="#eee" stroke="#999"/><path d="M9 7h10l3 3v13H9z" fill="#f6f6f6" stroke="#999"/><path d="M11 13h8M11 16h8M11 19h8" stroke="#aaa"/>',
wbrush:'<path d="M1 9l7-2 8 8-3 8Q4 22 1 9z" fill="#f2d46a" stroke="#b08d2a"/><path d="M10 8l9-8 4 4-8 10z" fill="#5f6f86"/>',
launch:'<path d="M1 12V1h12" stroke="#888" stroke-width="2.500" fill="none"/><path d="M10 10l10 10M21 9v12H9" stroke="#888" stroke-width="3" fill="none"/>',
erase:tx('Aa',9,10,12,'#334')+'<path d="M8 18l9-9 5 4-9 10z" fill="#dbe5f2" stroke="#6f87a8"/>',
bul:'<g fill="#2a4f9a"><rect x="2" y="2" width="3" height="3"/><rect x="2" y="10" width="3" height="3"/><rect x="2" y="18" width="3" height="3"/></g><path d="M8 3.500h14M8 11.500h14M8 19.500h14" stroke="#444" stroke-width="1.500"/>',
num:tx('1',3,7,8,'#2a4f9a','font-weight="bold"')+tx('2',3,15,8,'#2a4f9a','font-weight="bold"')+tx('3',3,23,8,'#2a4f9a','font-weight="bold"')+'<path d="M8 3.500h14M8 11.500h14M8 19.500h14" stroke="#444" stroke-width="1.500"/>',
ml:tx('1',3,7,8,'#2a4f9a')+tx('a',8,15,8,'#2a4f9a')+tx('i',13,23,8,'#2a4f9a')+'<path d="M7 3.500h15M12 11.500h10M16 19.500h6" stroke="#444" stroke-width="1.500"/>',
ind:'<path d="M2 2h20M12 7h10M12 12h8M12 17h10M2 22h20" stroke="#222" stroke-width="2"/><path d="M9 8l-6 4 6 4z" fill="#2a6fd0"/>',
ind2:'<path d="M2 2h20M12 7h10M12 12h8M12 17h10M2 22h20" stroke="#222" stroke-width="2"/><path d="M3 8l6 4-6 4z" fill="#2a6fd0"/>',
az:tx('A',7,10,11,'#2a4f9a','font-weight="bold"')+tx('Z',7,23,11,'#a02a2a','font-weight="bold"')+'<path d="M18 2v18M14.500 16l3.500 5 3.500-5" stroke="#222" stroke-width="1.500" fill="none"/>',
al:lines([20,14,20,14,20],2),ac:lines([20,12,20,12,20],2,'c'),ar:lines([20,13,20,13,20],2,'r'),aj:lines([20,20,20,20,20],2),
lsp:'<path d="M5 2v20M2 6l3-4 3 4M2 18l3 4 3-4" stroke="#2a6fd0" fill="none" stroke-width="1.500"/><path d="M11 5h11M11 9h9M11 13h11M11 17h9" stroke="#444" stroke-width="1.500"/>',
buck:'<path d="M3 11l8-8 9 8-8 7z" fill="#b9cbe6" stroke="#456"/><path d="M20 10q3 4 1 6" stroke="#36b" fill="none" stroke-width="2"/><path d="M1 20h20v3.500H1z" fill="#fff" stroke="#888"/>',
bord:'<path d="M2 2h19v19M2 2v19M11.500 2v19M2 11.500h19" stroke="#777" stroke-dasharray="1.500 1.500" fill="none"/><path d="M1 22h21" stroke="#333" stroke-width="1.500"/>',
bigaa:tx('A',8,15,20,'#a04fc0','font-weight="bold" font-family="Liberation Serif,serif"')+tx('A',16,24,22,'#3f78c9','font-weight="bold" font-family="Liberation Serif,serif"'),
binoc:'<path d="M4 2h5v5h6V2h5l3 20h-9v-8h-4v8H1z" fill="#4a6fae" stroke="#1f3b6d"/>',
repl:tx('ab',11,9,11,'#555','font-weight="bold"')+tx('ac',17,23,12,'#2c8a3c','font-weight="bold"')+'<path d="M4 11v8h5" stroke="#25a" stroke-width="2" fill="none"/>',
cursor:'<path d="M6 1l12 13-6 .500 3 7-3 1.500-3-8-3 4z" fill="#fff" stroke="#334a70" stroke-width="1.500"/>',
wsearch:'<circle cx="14" cy="8" r="6" fill="none" stroke="#2c62b5" stroke-width="3"/><path d="M10 13L3 22" stroke="#2c62b5" stroke-width="4"/>',
n1:'<path d="M4 1h16v22H4z" fill="#fff" stroke="#456"/><path d="M8 5h9M8 9h6M8 13h9M8 17h6M8 20h9" stroke="#456" stroke-width="1.500"/>',
n2:'<g fill="#fff" stroke="#4a6fae" stroke-width="1.800"><path d="M1 2h7v8H1zM14 2h7v8h-7zM1 14h7v8H1zM14 14h7v8h-7z"/></g>',
n3:'<path d="M2 1h20v7H2zM2 11h20v12H2z" fill="#fff" stroke="#4a6fae" stroke-width="1.500"/><path d="M5 4h14M5 15h14M5 19h14" stroke="#678" stroke-width="1.500"/><path d="M8 2.500h8v3.500H8zM8 13h8v6H8z" fill="#f0a92c"/>',
ruler:'<path d="M1 3h22v18H1z" fill="#ddd" stroke="#555" stroke-width="2"/><path d="M6 3v18M1 9h22" stroke="#555"/>',
book:'<path d="M2 8l9 3 9-8 3 9-10 11L2 17z" fill="#dfe8f5" stroke="#2d4d86" stroke-width="1.500"/><path d="M9 1l9 9M19 0l-9 10" stroke="#e2341d" stroke-width="3"/>',
s1:'<path d="M1 2h22v20H1z" fill="#fff" stroke="#555"/><path d="M4 6h16M4 9.500h16M4 13h16M4 16.500h16M4 19.500h12" stroke="#444" stroke-width="1.400"/>',
s2:'<path d="M2 3q6-2 10 2 4-4 10-2v17q-6-1-10 2-4-3-10-2z" fill="#f4f4f4" stroke="#555"/><path d="M12 5v17M4 8h6M4 12h6M4 16h6M14 8h6M14 12h6M14 16h6" stroke="#666" stroke-width="1.300"/>',
s3:'<path d="M1 2h17v18H1z" fill="#f4f4f4" stroke="#555"/><path d="M4 6h11M4 10h11M4 14h8" stroke="#555" stroke-width="1.400"/><circle cx="18" cy="17" r="6" fill="#3f8fc4"/><path d="M14 15q4-3 5 1t3 2" stroke="#4a9a4a" stroke-width="3" fill="none"/>',
s4:'<path d="M2 3h8M6 8h12M10 13h12M6 18h12M2 22h12" stroke="#777" stroke-width="1.700"/>',s5:'<path d="M1 3h22M1 8h22M1 13h22M1 18h22M1 22h22" stroke="#666" stroke-width="1.700"/>',
win:'<circle cx="12" cy="12" r="11.500" fill="#2e6b9c" stroke="#9fc6df" stroke-width=".700"/><ellipse cx="12" cy="6.500" rx="9" ry="5" fill="#8fb9d6"/><path d="M6 7q3-2 5.500 0l-1 5q-2.500-1.500-5.500 0z" fill="#e8592b"/><path d="M12.500 7q3 1.500 6 0l-1.500 5q-2.500 1.500-5.500 0z" fill="#85c440"/><path d="M4.700 13q3-1.500 5.500 0l-1.200 4.500q-2.500-1.500-5 0z" fill="#3f9be0"/><path d="M11.200 13.500q3 1.500 5.500 0l-1.500 4.700q-2.500 1.500-5.200 0z" fill="#fbd03a"/>',
fold:'<path d="M1 3l6-2h16v16H1z" fill="#e9d48a"/><path d="M4 2h8v3H4zM8 4h12v3" fill="#fff"/><path d="M1 6h22v14H1z" fill="#f7e6a6" stroke="#c5a955" stroke-width=".600"/><path d="M5 23v-9h15v9h-4v-6H9v6z" fill="#a4cde8" stroke="#6b9fc2" stroke-width=".500"/>',
wmp:'<path d="M7 2h14v20H7zM4 2h2v20H4z" fill="#79b5dc" stroke="#d6eefc" stroke-width=".600"/><circle cx="11" cy="12" r="8.500" fill="#f07c1e" stroke="#fbc79a"/><path d="M8.500 7l7 5-7 5z" fill="#fff"/>',
chrome:'<circle cx="12" cy="12" r="11.500" fill="#db4437"/><path d="M12 12L2 6.500A11.500 11.500 0 0 0 10 23.300l5-8z" fill="#0f9d58"/><path d="M12 7h10.500A11.500 11.500 0 0 1 10 23.300l6.500-9z" fill="#ffcd40"/><circle cx="12" cy="12" r="5.500" fill="#fff"/><circle cx="12" cy="12" r="4.300" fill="#4285f4"/>',
ie:'<path d="M12 3q9 0 9 10H8q1 4 4.500 4 3 0 4-2H21q-2 7-9 7-9 0-9-9.500T12 3zm0 4q-3 0-4 3.500h8.500Q15 7 12 7z" fill="#2f9de2"/><path d="M2 23Q-1 18 8 9T22 2q2 2 0 5 0-4-6-2-5 2-10 8-5 6-4 10z" fill="#f7c83c"/>',
fox:'<circle cx="12" cy="13" r="10.500" fill="#f4771f"/><path d="M4 4q1 3 3 3 4-5 6-6 0 4 3 5 6 4 5 10-3-7-8-7-5 1-5 5t5 5q-9 2-10-6z" fill="#fdbb2d"/><circle cx="11.500" cy="12" r="5" fill="#4a3fa5"/><path d="M3 12q3 8 10 6 4-1 5-5 2 9-7 10Q4 22 3 12z" fill="#e0343c"/>',
boxi:'<path d="M0 0h24v24H0z" fill="#1f72b8"/>'+tx('box',12,15.500,10,'#fff','font-weight="bold" textLength="18" lengthAdjust="spacingAndGlyphs"'),
outl:'<path d="M3 1h17v22H3z" fill="#f7b92d" stroke="#fff"/><circle cx="10" cy="10" r="5" fill="none" stroke="#fff" stroke-width="2.600"/><circle cx="18" cy="10" r="4" fill="#fff" stroke="#e8a21c"/><path d="M9 15h12v7H9z" fill="#fff" stroke="#d18f18"/><path d="M9 15l6 4 6-4" fill="none" stroke="#d18f18"/>',
pict:'<path d="M3 3h19v18H3z" fill="#8cc8ee"/><path d="M3 13l6-4 5 4 4-2 4 2v4H3z" fill="#4d7f4a"/><path d="M3 15h19v6H3z" fill="#3f8cc4"/><path d="M1 6V1h5M18 1h5v5M23 18v5h-5M6 23H1v-5" stroke="#4a9be0" stroke-width="2.500" fill="none"/>',
cab:'<path d="M9 3l8-3 6 2v16l-7 5-7-3z" fill="#e0b73c" stroke="#7d5f10"/><path d="M2 13l9-3 6 3v7l-9 4-6-4z" fill="#f4da7a" stroke="#7d5f10"/><circle cx="8" cy="12" r="5" fill="#3f8fc4"/><path d="M6 9l4 1-1 5" stroke="#4a9a4a" stroke-width="2.500" fill="none"/>',
qg:'<path d="M14 3Q4 3 3 13q0 8 7 9 5 0 7-6" fill="none" stroke="#b5d43b" stroke-width="5"/><path d="M8 13L17 4l-2-2 8-1-1 9-2-2-9 9z" fill="#2f7d2c"/><path d="M13 16l6 7" stroke="#8fbf2d" stroke-width="4"/>',
wd:'<path d="M2 1h16v20H2z" fill="#2a66b8" stroke="#d6e6fa"/>'+tx('W',10,16,15,'#fff','font-weight="bold" font-family="Liberation Serif,serif"')+'<path d="M12 12h10v11H12z" fill="#fff" stroke="#7a93b8"/><path d="M14 15h6M14 18h6M14 21h6" stroke="#5a83c0"/>',
t1:'<circle cx="12" cy="12" r="11" fill="#1d75c2"/><path d="M6 4q8 2 5 8t5 9M14 3q6 5 7 9" stroke="#8fd13a" stroke-width="4.500" fill="none"/>',
t2:'<path d="M4 12a8 8 0 0 1 16 0" stroke="#1c86d8" stroke-width="2.500" fill="none"/><path d="M1 19h22" stroke="#1c86d8" stroke-width="2"/>'+tx('2',12,21,14,'#1c9bf0','font-weight="bold"'),
t3:'<path d="M6 2l6 4-6 4-6-4zM18 2l6 4-6 4-6-4zM6 10l6 4-6 4-6-4zM18 10l6 4-6 4-6-4zM12 15l5 4-5 3-5-3z" fill="#fff"/>',
t4:'<circle cx="12" cy="12" r="11.500" fill="#a9cbe4"/><path d="M1 13h4l2-5 3 9 3-12 3 9 2-3h5" stroke="#fff" stroke-width="1.700" fill="none"/>',
t5:'<path d="M3 1v22" stroke="#fff" stroke-width="2"/><path d="M5 3h8v9H5zM14 5h8l-2 4q0 5-6 4z" fill="#fff"/>',
t6:'<path d="M9 6h14v12H9z" fill="none" stroke="#fff" stroke-width="2"/><path d="M10 22h12M16 18v4" stroke="#fff" stroke-width="2"/><path d="M1 2h7v5H6v14H3V7H1z" fill="#fff"/>'
};
const ic=(n,s=24)=>`<svg class="block shrink-0 overflow-visible" width="${s}" height="${s}" viewBox="0 0 24 24">${I[n]||''}</svg>`;
document.querySelectorAll('[data-i]').forEach(e=>{e.innerHTML=ic(e.dataset.i,+e.dataset.s)});

/* advance widths of the interface font at 11px, used for values without a fixed label width */
const tw=s=>[...s].reduce((a,c)=>a+(/[0-9_]/.test(c)?6:/[.,:]/.test(c)?3.300:/[iljI]/.test(c)?2.800:/[ftr]/.test(c)?3.800:c==' '?3.400:c=='m'?9:c=='W'?10:c=='M'?8.500:c=='='?8:c=='%'?10.500:/[A-Z]/.test(c)?6.800:5.700),0).toFixed(1);
const F=s=>s?`<span data-w="${tw(s)}">${s}</span>`:'';

/* ---------- horizontal strips: [centre, width, content] ---------- */
const strip=(name,x0,items)=>{
  const el=document.querySelector(`[data-strip="${name}"]`);let x=x0,h='';
  items.forEach(([c,w,html])=>{const l=c-w/2;h+=`<div class="shrink-0 flex items-center justify-center" style="margin-left:${(l-x).toFixed(1)}px;width:${w}px">${html}</div>`;x=l+w});
  el.innerHTML=h;
};
const icon=(c,n,s=24)=>[c,s,ic(n,s)];
const T=(a,b,s,cls='')=>[(a+b)/2,b-a,`<span class="${cls}" data-w="${b-a}">${s}</span>`];
const dn=(c,s=7,col='')=>[c,10,`<svg class="${col}" width="10" height="6" viewBox="0 0 10 6"><path d="M${5-s/1.7} .500h${s*1.18}L5 5.500z" fill="currentColor"/></svg>`];
const hd=(c,h=26)=>[c,6,`<svg width="6" height="${h}"><defs><pattern id="hp" width="6" height="5" patternUnits="userSpaceOnUse"><path d="M1 1h2v2H1z" fill="#c3c3c3"/><path d="M3.500 3h2v1.500h-2z" fill="#d4d4d4"/></pattern></defs><rect width="6" height="${h}" fill="url(#hp)"/></svg>`];
document.querySelectorAll('.dots').forEach(e=>{e.innerHTML='<svg class="block" width="100%" height="6"><defs><pattern id="dp" width="5" height="6" patternUnits="userSpaceOnUse"><path d="M0 1h1.500v1.500H0zM2 3.500h1.500V5H2z" fill="#bdbdbd"/></pattern></defs><rect width="100%" height="6" fill="url(#dp)"/></svg>'});
const dots=(a,b)=>[(a+b)/2,b-a,`<svg class="block" width="${b-a}" height="6"><rect width="100%" height="6" fill="url(#dp)"/></svg>`];

strip('q-title',0,[icon(7,'leaf',15),T(21,149,'QGIS 2.18.13 - Prova_14',"font-['Open_Sans'] font-stretch-normal text-[12px] text-black [text-shadow:0_0_6px_#fff,0_0_6px_#fff]")]);
strip('q-menu',0,[T(9,44,'Project'),T(58,77,'Edit'),T(91,114,'View'),T(127,155,'Layer'),T(170,209,'Settings'),T(223,258,'Plugins'),T(272,302,'Vector'),T(317,349,'Raster'),T(364,411,'Database'),T(426,447,'Web'),T(462,482,'SCP'),T(496,548,'Processing'),T(562,584,'Help')]);
const seq=(a,ns)=>ns.map((n,i)=>icon(a+35*i,n));
strip('q-tb1',0,[hd(8),...seq(29,['neu','open','save','saveas','comp','compm']),hd(232),...seq(253,['touch','pan','panto','zin','zout','z11','zfull','zsel','zlay','zprev','znext','bknew','bk','refresh']),hd(737),icon(757,'crop'),hd(786),icon(806,'help'),hd(835),icon(855,'cad')]);
strip('q-tb2',0,[hd(8),...seq(29,['tri','magnet','undo','redo','e1','e2','e3','e4','e5','e6','e7','e8','e9','e10','e11','e12','e13','e14']),dn(647,8,'text-[#888]')]);
const press=(n)=>`<span class="w-[33px] h-[33px] rounded-[3px] border border-[#777] bg-[#d3d3d3] flex items-center justify-center shrink-0">${ic(n)}</span>`;
strip('q-tb3',0,[hd(8),[29,24,ic('pens')],dn(41,5),[64,33,press('pen')],icon(98.500,'savee'),[134,33,press('addf')],icon(169,'curve'),dn(191.500,8),...[217,252,286,321,356,391].map((x,i)=>icon(x,['movef','node','trash','cut','copy','pas'][i]))]);
const wb=s=>`<span class="w-[13px] h-[13px] rounded-[2px] border border-[#555] bg-[#f4f4f4] flex items-center justify-center">${s=='x'?'<svg width="9" height="9"><path d="M1.500 1.500l6 6M7.500 1.500l-6 6" stroke="#000" stroke-width="1.600"/></svg>':'<svg width="9" height="9"><path d="M3 .500h5v5H3zM1 3.500h5v5H1z" fill="#fff" stroke="#000" stroke-width="1.300"/></svg>'}</span>`;
strip('lp-title',93,[dots(95,130),T(141,195,'Layers Panel'),dots(203,238),[249,13,wb('f')],[264,13,wb('x')]]);
strip('lp-tools',93,[icon(108,'broom',16),icon(135,'grpa',16),icon(162,'eye',16),dn(169.500,5),icon(189,'fun',16),icon(216,'epsf',16),dn(234,8),[264,10,'<b class="text-[13px]">»</b>']]);

/* vertical toolbar: [centre y, icon, arrow] */
{let y=162,h='';const V=(cy,n,a,hh=24)=>{const w=n=='-'?6:hh;const html=n=='-'?`<svg width="41" height="6"><rect width="41" height="6" fill="url(#dp)"/></svg>`:ic(n,24);h+=`<div class="shrink-0 flex items-center" style="margin-top:${cy-w/2-y}px;height:${w}px;padding-left:${n=='-'?5:a==2?14:8}px">${html}${a==1?`<svg class="ml-[5px]" width="10" height="6"><path d="M0 0h9l-4.500 5z" fill="${n=='gear'?'#999':'#000'}"/></svg>`:''}</div>`;y=cy+w/2};
V(171,'-');['v1','v2','v3','v4','v5','v6','v7','v8','v9','v10'].forEach((n,i)=>V(190+34*i,n,[0,0,0,1,1,0,1,0,0,1][i]));V(525,'-');
[['info',2],['gear',1],['sel',1],['eps',1],['desel',2],['tab',2],['abac',2],['sigma',2],['meas',1],['note',2],['html',1]].forEach(([n,a],i)=>V(543.500+34*i,n,a));V(913,'-');V(932,'py',2);V(966,'dclk',2);
h+='<b class="text-[12px] rotate-90 w-[12px] ml-[20px] mt-[16px]">»</b>';document.getElementById('vbar').innerHTML=h}

/* layer tree */
{const cb='<span class="w-[12px] h-[12px] border border-[#bbb] bg-white flex items-center justify-center shrink-0"><svg width="9" height="9"><path d="M1 1l7 7M8 1L1 8" stroke="#000" stroke-width="2.500"/></svg></span>';
const ex=s=>`<span class="w-[9px] h-[9px] border border-[#999] bg-white flex items-center justify-center shrink-0"><svg width="7" height="7"><path d="${s=='+'?'M1 3.500h5M3.500 1v5':'M1 3.500h5'}" stroke="#333"/></svg></span>`;
const sw=c=>`<span class="w-[16px] h-[16px] border border-[#444] shrink-0 ${c}"></span>`;
const dot=c=>`<span class="w-[10px] h-[10px] rounded-full shrink-0 mx-[3px] ${c}"></span>`;
const dash='<span class="w-[7px] border-t border-dotted border-[#888] shrink-0"></span>';
const R=[[5,ex('−'),ic('grp',15),T(0,101,'brigaid project layers')[2]],
[25,ex('−'),'<svg class="shrink-0" width="16" height="14"><g fill="#fff" stroke="#888"><circle cx="3.500" cy="10.500" r="1.300"/><circle cx="6" cy="4.500" r="1.300"/><circle cx="12.500" cy="3" r="1.300"/></g></svg>','<b data-w="60">DSV points</b>'],
[51,'',dot('bg-[#f00]'),T(0,56,'interruption')[2]],[51,'',dot('bg-[#0c0]'),T(0,64,'non_return…')[2]],[51,'',dot('bg-transparent'),T(0,38,'not_set')[2]],[51,'',dot('bg-[#5b78e8]'),T(0,27,'pump')[2]],
[31,'','<svg class="shrink-0" width="16" height="15" viewBox="0 0 24 24"><path d="M3 10l5-4M2 14h7M14 22l2-5M17 14h6" stroke="#48b4f0" stroke-width="2.500"/><path d="M6 20l2-6 9-12 4 3-9 12z" fill="#a86a50" stroke="#6b3a28"/></svg>','<b class="underline" data-w="55">WDS lines</b>',1],
[31,'',sw('bg-[#8cd5fb]'),'<b data-w="73">WR polygons</b>'],[31,'','<svg class="shrink-0" width="16" height="8"><path d="M0 0h16v8H0z" fill="#600"/><path d="M.500 1.500h4v5h-4zM6 1.500h4v5H6zM11.500 1.500h4v5h-4z" fill="#f01010"/></svg>','<b data-w="42">EP lines</b>'],
[31,'',sw('bg-white'),'<b data-w="67">EP polygons</b>'],[31,'',sw('bg-[#c7ecbc]'),'<b data-w="68">EA polygons</b>'],
[5,ex('+'),ic('grp',15),T(0,104,'brigaid support layers')[2]],[5,ex('+'),ic('grp',15),T(0,93,'brigaid other layers')[2]]];
document.getElementById('tree').innerHTML=R.map(r=>`<div class="h-[16px] flex items-center ${r[4]?'bg-[#eeeeee]':''}"><div class="flex items-center shrink-0 gap-[1px] justify-end" style="padding-left:${r[0]}px">${r[1]}${dash}</div><div class="ml-[2px] flex items-center gap-[6px]">${cb}${r[2]}${r[3]}</div></div>`).join('')}

/* dialog */
{document.querySelector('[data-strip="dlg-title"]').innerHTML=`<div class="mt-[6px] ml-[3px]">${ic('leaf',13)}</div><div class="mt-[7px] ml-[6px] font-['Open_Sans'] font-stretch-normal text-[12px] [text-shadow:0_0_6px_#fff,0_0_5px_#fff]"><span data-w="227">Water discharge system (WDS) parameters</span></div><div class="ml-auto flex"><div class="w-[28px] h-[18px] rounded-bl-[4px] border border-t-0 border-[#3c4651] bg-gradient-to-b from-[#dfe4ea] to-[#8d99a6] text-white font-bold text-[13px] flex items-center justify-center [text-shadow:0_0_2px_#000,0_0_1px_#000]">?</div><div class="w-[47px] h-[18px] rounded-br-[4px] border border-l-0 border-t-0 border-[#4a1512] bg-gradient-to-b from-[#e0998c] via-[#c23a22] to-[#d5533a] text-white font-bold text-[13px] flex items-center justify-center [text-shadow:0_0_2px_#000]">x</div></div>`;
window.D=[['Feature id',49,'4'],['Description',54,'None','w'],['Notes on project unit',101,'None','w'],['Destination type (limited/unlimited)',166,'leads to unlimited basin','c',111],['Type',23,'tipo x','s',27],['Valve type (pump/check valve',142,'check valve'],['EA origin',42,'1'],['EP origin',41,'NULL'],['WR destination',73,'99999999'],['Length of WDS segment',116,'50.0837770486'],['CW_EA m³',52,'81.4756764933'],['CW_EP m³',51,'NULL'],['CAP_WR m³',59,'inf'],['Max elevation of EA origin',125,'2.92369890213'],['Max elevation of EP origin',124,'NULL'],['Max elevation of WR origin',129,'0.7034034729'],['',0,'5250.41888524']];
document.getElementById('dlgrows').innerHTML=D.map(([l,w,v,k,vw])=>{
const base='h-[20px] rounded-[2px] flex items-center px-[4px] border ';
let f;if(k=='w')f=`<div class="${base} w-[145px] bg-white border-[#b5b5b5] justify-between">${F(v)}<svg width="13" height="10"><path d="M4 0h9v10H4L0 5z" fill="#999"/><path d="M5.500 2.500l5 5M10.500 2.500l-5 5" stroke="#fff"/></svg></div>`;
else if(k)f=`<div class="${base} ${k=='c'?'w-[145px]':'w-[56px]'} bg-gradient-to-b from-white to-[#e2e2e2] border-[#a5a5a5] justify-between"><span data-w="${vw}">${v}</span><span class="border-l border-[#bbb] h-full flex items-center pl-[4px]"><svg width="8" height="5"><path d="M0 0h8L4 5z"/></svg></span></div>`;
else f=`<div class="${base} w-[145px] bg-[#efefef] border-2 border-[#a8a8a8] text-[#808080]">${F(v)}</div>`;
return `<div class="flex items-center h-[20px]"><div class="w-[175px] flex justify-end">${l?`<span data-w="${w}">${l}</span>`:''}</div><div class="ml-[4px]">${f}</div></div>`}).join('')}

/* floating toolbar */
strip('float',861,[hd(867),...[888,923,958,993,1028,1063,1098,1133].map((x,i)=>icon(x,'f'+(i+1))),dn(1145,4),[1168,33,press('f9')],icon(1203,'f10')]);

/* map */
{
const road=d=>`<path d="${d}" fill="none" stroke="#111" stroke-width="8.500" stroke-linejoin="round"/><path d="${d}" fill="none" stroke="#fff" stroke-width="5.500" stroke-linejoin="round"/>`;
const ep=(d,k=1)=>`<path d="${d}" fill="none" stroke="#000" stroke-width="${4*k}"/><path d="${d}" fill="none" stroke="#200" stroke-width="${16*k}" stroke-dasharray="${15*k} ${3.500*k}"/><path d="${d}" fill="none" stroke="#f00a0a" stroke-width="${11*k}" stroke-dasharray="${11*k} ${7.500*k}" stroke-dashoffset="${-2*k}"/>`;
const yel=d=>`<path d="${d}" fill="none" stroke="#1a1a80" stroke-width="3"/><path d="${d}" fill="none" stroke="#ffff00" stroke-width="11" stroke-dasharray="36 9"/>`;
const num=(x,y,s,c,r=17)=>`<ellipse cx="${x}" cy="${y}" rx="${r}" ry="${r*1.3}" fill="#fff"/><text x="${x}" y="${y+11}" font-size="28" text-anchor="middle" fill="${c}">${s}</text>`;
const X=(x,y)=>`<path d="M${x-9} ${y-11}l18 22M${x+9} ${y-11}l-18 22" stroke="#e0301c" stroke-width="3.500"/>`;
const arrows=(x1,y1,x2,y2,n,c,w)=>{let s=`<path d="M${x1} ${y1}L${x2} ${y2}" stroke="${c}" stroke-width="${w}"/>`;const a=Math.atan2(y2-y1,x2-x1);for(let i=0;i<n;i++){const t=(i+.5)/n,x=x1+(x2-x1)*t,y=y1+(y2-y1)*t;for(const g of[a+.8,a-.8])s+=`<path d="M${x} ${y}l${17*Math.cos(g)} ${17*Math.sin(g)}" stroke="${c}" stroke-width="5"/>`}return s};
const tl=(d)=>`<path d="${d}" fill="none" stroke="#6a6d5c" stroke-width="2.500"/>`;
const pl=(d)=>`<path d="${d}" fill="none" stroke="#77789a" stroke-width="2.500"/>`;
const B3='M715 454L828 487L823 530L770 516L709 492ZM770 518L828 534L824 562L839 566L830 640L792 630L796 603L757 592ZM795 634L830 640L823 705L761 686L768 651L791 655ZM992 564L1064 583L1054 673L978 654ZM1057 640L1070 643L1063 678L1051 674ZM1038 680L1085 691L1076 767L1029 757ZM1400 491L1456 486L1459 567L1404 571ZM1333 592L1394 617L1401 600L1453 625L1430 702L1318 652ZM1442 658L1459 663L1447 705L1432 700ZM860 736L923 764L906 831L843 804ZM712 800L745 815L727 880L694 866ZM695 890L744 911L714 1023L657 999ZM642 948L672 960L657 1000L631 990ZM607 1011L676 1047L668 1077L598 1041ZM828 871L884 898L863 973L814 950L824 910L819 906ZM962 832L981 845L966 890L930 876L933 860L951 864ZM1066 790L1091 798L1088 834L1096 837L1090 868L1052 856ZM779 1038L842 1067L824 1131L762 1101ZM1008 986L1056 1013L1050 1045L1055 1048L1034 1115L1028 1117L1014 1142L976 1128L974 1133L924 1106L945 1035L975 1048L980 1038L993 1041ZM1192 891L1225 905L1232 897L1303 940L1297 985L1285 1015L1262 1010L1258 1018L1173 967L1175 940ZM1334 988L1367 995L1367 1015L1468 1028L1464 1100L1319 1080ZM1209 1079L1257 1101L1224 1236L1195 1225L1190 1231L1132 1198L1138 1175L1143 1130L1182 1145ZM1336 1139L1433 1150L1428 1220L1331 1208ZM1326 1283L1455 1297L1452 1363L1322 1350ZM722 1198L794 1230L779 1285L708 1256ZM779 1195L816 1211L796 1294L778 1287L793 1228L775 1215ZM893 1189L988 1199L986 1235L981 1238L978 1290L984 1292L980 1332L886 1320L889 1290L893 1285L894 1230L890 1228ZM688 1381L744 1410L716 1527L645 1527L659 1460L688 1470L693 1455L670 1443ZM791 1437L840 1447L902 1448L902 1472L915 1474L918 1451L1029 1461L1027 1527L912 1527L911 1511L899 1511L898 1527L785 1523ZM1068 1467L1173 1478L1172 1527L1064 1527ZM1223 1504L1268 1508L1269 1500L1311 1503V1527H1223ZM1371 1512L1417 1516V1527H1369ZM1542 465H1568V525H1542ZM153 1186L174 1220L149 1245L202 1330L225 1315L248 1353L187 1406L97 1238ZM187 1221L230 1300L208 1325L156 1245ZM220 1460L249 1443L265 1475L256 1480L273 1527H240ZM433 1435L509 1474L490 1527H420L410 1508ZM341 1527L380 1504L388 1527ZM22 830L33 825L71 892L29 932L22 920ZM22 980L33 980L77 1054L22 1102Z';
const B3g='M861 491L936 500L933 566L857 558ZM936 498L1011 505L1009 559L934 552ZM615 541L659 562L632 667L586 647ZM696 600L738 615L727 677L684 661ZM652 716L684 726L672 777L641 767ZM1081 525L1203 503L1211 580L1167 590L1167 596L1091 610ZM1203 503L1260 492L1267 550L1210 559ZM615 851L651 866L652 885L647 907L620 898L614 914L601 908ZM596 915L611 922L601 957L584 950ZM22 680L47 712L22 745Z';
const B4='M114 465L165 463L167 492L175 493V523L115 525ZM173 455L251 451L252 528L176 531ZM259 461L313 457L314 518L253 522V490L259 488ZM331 456L360 454L363 565H335ZM136 840L212 833L218 953L143 960ZM255 835L336 830L343 956L262 963ZM164 1022L221 1020L222 1080L214 1082L215 1117L210 1118L207 1170L151 1172L153 1112L159 1108L160 1078L165 1075ZM277 1015L335 1013L337 1072L342 1074L343 1120L348 1123V1187H291L290 1132L285 1130V1078L278 1076ZM136 1238L214 1235V1290H203V1315H214V1370L138 1372L137 1345L132 1343L131 1262L136 1260ZM280 1241L338 1240L339 1290L334 1292V1340L340 1342V1398L284 1400L283 1360L275 1358V1285L281 1283ZM278 1451L336 1449L337 1490L343 1500V1527H281ZM739 155L1073 172L1071 234L1120 236L1119 284L1183 287L1174 543L1107 539L1113 326H1065L1044 958L775 945L795 381L732 378ZM1516 1395V1476L1481 1440ZM905 1457L918 1475L915 1482L960 1527H905L878 1493ZM964 1512L971 1522L968 1527H955Z';
const B4g='M1177 926L1225 944L1160 1195L1109 1174ZM1327 748L1364 763L1366 775L1361 796L1320 780ZM1305 825L1335 840L1328 861L1358 872L1345 924L1441 962L1428 1018L1272 962L1285 908L1300 852ZM1365 852L1393 862L1390 884L1360 874ZM1306 1041L1360 1066L1346 1117L1290 1092ZM1260 1139L1310 1160L1313 1170L1332 1178L1322 1219L1310 1216L1303 1251L1239 1228ZM1430 1053L1516 1090V1180L1508 1201L1437 1168L1457 1103L1419 1085ZM1508 970H1516V1037L1498 1035Z';
const m=`<g id="map"><rect x="280" y="164" width="1638" height="512" fill="#8c8e74"/>
<g transform="translate(191.100 -367.400) scale(1.0777 .6888)">
<path d="M552 1090V1160H518V1260H462V1210H405V1100H380V900H560z" fill="#808380"/>
<path d="M300 1130L475 1514H150L226 1365z" fill="#5f60a4"/><path d="M80 773H210V800H180V840H80z" fill="#6062a0"/>
<path d="M85 773H140V812H85zM150 773H185V800H150zM300 1130L315 1165L350 1250L400 1350L455 1460L475 1514H440L425 1450L370 1380L350 1310L310 1240L290 1175zM293 1430l25-42 18 20-25 43zM385 1480l15-28 14 62h-24z" fill="#a2386a" stroke="#222" stroke-width="1"/>
<path d="M340 940L374 910L423 1050L385 1090zM225 775L255 810L245 822H228zM262 808L279 830L268 850L255 835zM290 843L300 852L283 868L277 858zM300 888L322 910L322 942L297 940L272 970L266 955L290 925zM237 1048L284 1098L274 1112L231 1066zM330 1050L350 1090L380 1110L425 1088L431 1105L380 1170L370 1150L348 1155L318 1065zM420 1170L441 1195L425 1215L409 1190zM404 1198L427 1220L415 1262L388 1238zM408 1225L443 1280L415 1303L388 1250zM226 1165H236V1210H226zM190 1285H226V1330H190zM170 1020H200V1080H170z" fill="#c05450" stroke="#111" stroke-width="1"/>
<path d="M200 1015L290 960L378 885L420 838M228 870L350 1190L455 1430L500 1514M240 870L360 1190L475 1450L505 1514M300 1130L262 1240L255 1350L226 1500M385 895L500 1155L503 1280M300 1095L340 1000M320 990L385 1080M300 1090L285 1110L262 1240" fill="none" stroke="#111" stroke-width="3.500"/>
<path d="M200 1015L290 960L378 885L420 838M228 870L350 1190L455 1430L500 1514M240 870L360 1190L475 1450L505 1514M300 1130L262 1240L255 1350L226 1500M300 1095L340 1000M320 990L385 1080M300 1090L285 1110L262 1240" fill="none" stroke="#fff" stroke-width="2"/>
<path d="M475 1514L300 1130L226 1368L170 1514M80 835L105 832" stroke="#ff0" stroke-width="4" fill="none" stroke-dasharray="16 3"/><path d="M226 1385Q260 1400 258 1440T245 1514" stroke="#0a0ab8" stroke-width="6" fill="none"/></g>
<g transform="translate(640 150) scale(.44643 .34436)">
<path d="M22 150L345 200L560 280L1300 370L1568 240V290H1530V300H1500V330H1475V355H1455V390H1430V418H1400V510H1350V578H1280V545H1062V514H700V703H675V922H578V952H408V983H237V1015H116V703H22ZM625 1270H650V1300L660 1360H698V1410L725 1430L700 1527H530V1485H555V1425H580V1395H605Z" fill="#808380"/>
<path d="M315 40L460 235L560 280L900 380L1310 370L1480 300L1568 228V40Z" fill="#3d42c8"/><path d="M625 40H720V75H845V105H740V90H625zM1250 75h100v-30h200v50h-300zM1110 105h140v30h-140z" fill="#5557b4" opacity=".7"/></g>
<g transform="translate(1280 150) scale(.42090 .34436)">
<path d="M0 322L50 300L180 205L245 158L335 138L405 75L500 40H530V75H455V103H380V135H350V150H275V180H250V210H222V235H195V262H168V292H145V325H93V356H43V388H0Z" fill="#7f8284"/>
<path d="M0 40H500L405 75L335 138L245 158L180 205L50 300L0 322Z" fill="#3d42c8"/>
<path d="M1185 421H1275V450H1516V1250L1200 1527H940L945 1460H968V1330H993V1270H1018V1235H1044V1205H1018V1172H967V1140H916V1110H865V1078H813V1046H790V1015H764V983H686V890H710V827H735V770H764V735H785L900 577H1070V607H1172V577H1250V545H1225V514H1198V483H1180Z" fill="#808380"/>
<path d="M1516 1170V1320L1330 1527H1175V1490H1200V1455H1250V1420H1300V1385H1325V1330H1350V1300H1375V1270H1428V1240H1455V1208H1480V1180z" fill="#76778c"/>
<path d="M1255 1530L1520 1262" stroke="#514a8c" stroke-width="18"/><path d="M1230 1527L1516 1232M1130 1440L1360 1527M1125 1177H1190" stroke="#5c5a92" stroke-width="2.500" fill="none"/></g>
<g transform="translate(640 150) scale(.44643 .34436)">
<g fill="none" stroke="#0000b4"><path d="M440 40L570 187L1030 275L1290 290L1540 95L1568 82" stroke-width="15"/><path d="M505 40L675 147L1212 196L1335 152L1480 85L1568 40M1105 40L1140 66L1275 62L1360 40" stroke-width="3" stroke="#000090"/></g>
${tl('M577 398L520 570L603 745L495 895M510 875L672 1163M868 398L858 490M22 640L70 645L262 1165L390 1348L556 1482L672 1163L760 900M350 1095L282 1190')}
${pl('M70 890L220 1050M50 1090L100 1145M138 1130L155 1186M300 1060L282 1090M745 815L785 890L828 873M810 795L845 804M1070 643L1150 667M1167 596L1110 868L1168 1017M1085 728L1132 762M1057 1042L1137 1028M738 1075L765 1100M988 1240L1062 1288M1106 1120L1145 1130M866 1355L860 1445M988 1370L1000 1455M1148 1390L1141 1472M1286 1408V1500M1418 1425V1515M1323 1350L1327 1398M1459 530L1498 502M1453 670L1505 620M1468 1055L1515 1062M1433 1192L1568 1197M1515 915H1568M1515 1024H1568')}
<g fill="#c05450" stroke="#111" stroke-width="3.500"><path d="${B3}"/><path d="${B3g}" fill="#b94e58"/><path d="M295 773L532 921L460 1159L254 1032Z"/></g>
<path d="M296 775L530 921L520 951H408V983H262z" fill="#b74d57"/><path d="M712 456L826 488L823 513H760zM861 493L936 500L1010 506V514H861z" fill="#b74d57"/>
<path d="M-270 44H262L340 192L65 440L-93 226L-220 323Z" fill="#b6b6b6"/>
<g fill="#d8959a" stroke="#866" stroke-width="2.500"><path d="M145 40L182 108L125 160L86 82ZM235 40L262 40L322 180L288 206L282 185L271 187L212 87L181 110L170 82ZM61 239L142 355L92 410L22 330V290ZM-200 110L-110 44H-50V150L-180 270z"/></g>
<path d="M60 200L180 325" stroke="#999" stroke-width="2"/>
${road('M585 40L612 67L700 102L800 128L1155 157L1320 132L1475 40')}${road('M280 40L340 190L372 222L490 300L630 398L740 446L860 490L1070 488L1460 452Q1495 455 1500 485L1505 620L1507 770L1515 1150L1522 1430L1519 1530')}
${road('M1507 768L1568 764')}${road('M0 440L22 480L210 810L212 950L220 1048L660 1330')}${road('M220 1048L30 1230L0 1265')}${road('M860 490L838 670L685 1265L598 1530')}
${road('M350 1150L346 1200L370 1275L398 1320L555 1400L588 1397L620 1308')}${road('M683 1267L808 1344L1060 1370L1568 1433')}${road('M1168 1017L1137 1028L1070 1198L1061 1365')}${road('M0 1105L22 1145L220 1530')}${road('M0 1185L22 1225L185 1530')}
<path d="M354 265L536 437L489 549L577 738L475 847L105 503Z" fill="#7fa575" stroke="#111" stroke-width="3"/>
<path d="M22 1330L95 1440L145 1527H22z" fill="#a53a68" stroke="#111" stroke-width="3"/><path d="M22 1350L45 1340M22 1450L80 1410M45 1530L85 1500 60 1480 100 1440" stroke="#111" stroke-width="3" fill="none"/><path d="M22 1410L40 1440L22 1460zM60 1527L85 1510 95 1527z" fill="#5860a8"/>
${yel('M22 1280L95 1400L155 1530')}${yel('M315 40L320 65L460 235L560 280L900 370L1310 370L1480 300L1568 228')}
${ep('M265 40L340 192L65 440L-93 226L-220 323L-262 44')}
<path d="M1197 637L1490 747L1462 973L1167 843Z" fill="#bcbdac"/>
<g fill="#dd9a9a" stroke="#876" stroke-width="2.500"><path d="M1245 694L1294 717L1260 838L1211 818ZM1342 742L1410 772L1414 765L1460 785L1450 833L1428 828L1420 860L1442 868L1427 923L1378 903L1380 888L1311 860Z"/></g>
<path d="M1348 757L1430 787L1402 889L1322 855Z" fill="#749fc8" stroke="#111" stroke-width="3"/>
${ep('M1197 637L1490 747L1462 973L1167 843Z')}
${arrows(373,377,536,137,15,'#ffff10',7)}<path d="M373 377L536 137" stroke="#e03010" stroke-width="2.500"/>${X(373,377)}${X(536,137)}
<g font-size="26" fill="#ee1430" text-anchor="middle"><text transform="translate(318 95) rotate(65)" y="9">4</text><text x="190" y="303">5</text><text x="1350" y="672">9</text><text transform="translate(1160 732) rotate(-85)" y="10">12</text><text x="1451" y="949">1</text><text transform="translate(437 232) rotate(80)" fill="#2a7fd0" y="9">4</text></g>
${num(41,185,'1','#111',16)}${num(368,548,'1','#3a7a3a')}<path d="M1345 812l12-12v24z" fill="#2aa5f0"/>${num(1331,802,'2','#111',16)}${num(1375,823,'2','#1c86c8')}</g>
<g transform="translate(1280 150) scale(.42090 .34436)">
<path d="M0 180L115 92L245 40" stroke="#0000b4" stroke-width="15" fill="none"/><path d="M0 300L190 180L320 128L385 72L450 40M0 85L70 42" stroke="#000090" stroke-width="3" fill="none"/>
${tl('M322 140L362 460L370 735L366 1527M621 40L628 170L650 310L694 438L686 850L700 1085L860 1330L895 1410L1040 1527M895 1410L835 1527M1060 40L1200 275L1215 420L1110 692L1140 865L1223 885L1290 727L1365 457H1516M1100 40L1394 384L1445 240L1487 40M1445 240L1516 260M1210 885L1241 958L1095 1527M370 735L700 1110M1516 1320L1320 1527')}
${pl('M223 530V590M222 665V745M318 768L315 830M890 950L785 1210M85 916H140M90 1024L160 1022M100 1197L290 1188M97 1333L130 1302M275 1360L225 1437L280 1515')}
<g fill="#c05450" stroke="#111" stroke-width="3.500"><path d="${B4}"/><path d="${B4g}" fill="#b94e58"/></g>
<path d="M917 514H992V545H1018V577H1056L1043 956L777 944L783 735H788V703H813V672H839V640H865V606H892V577H917Z" fill="#b74d57"/>
<path d="M829 162L824 280L1109 293L1110 259L1042 255M1044 172L1040 288M824 190H816L814 262H823M779 866L1046 882M1160 988L1208 1010M1113 1158L1162 1182M1300 852L1330 862L1316 915M1285 908L1345 924M1334 925L1323 978M1404 950L1393 1004M1248 1193L1312 1218" fill="none" stroke="#111" stroke-width="4"/>
${road('M76 768L275 750L325 755L370 768L420 803L700 1105L785 1200L1020 1468L1060 1530L1130 1440L1200 1150L1402 472L1520 470')}${road('M95 1430L225 1437')}
${yel('M0 322L50 300L180 205L245 158L335 138L405 75L505 40')}
<g stroke="#111" stroke-width="3"><path d="M383 312L623 300L651 971L407 725Z" fill="#87ab70"/><path d="M397 887L663 1132L693 1408L392 1443Z" fill="#4d9ab4"/><path d="M145 590L295 588L296 663L147 664Z" fill="#ffff00"/></g>
${arrows(158,638,28,770,8,'#2aa5f0',6)}${arrows(430,636,252,628,8,'#1f9fe0',6)}${X(158,638)}${X(28,770)}${X(252,628)}${X(430,636)}
<g font-size="26" fill="#1478c0" text-anchor="middle"><text x="345" y="609">2</text><text x="78" y="690">3</text></g>
${num(220,627,'1','#1c86c8',18)}${num(525,580,'2','#5a8a4a',18)}${num(519,1216,'3','#1c86c8',18)}</g></g>`;
document.getElementById('mapsvg').innerHTML=m}

/* summary dock */
strip('bs-title',280,[dots(282,1036),T(1049,1119,'Brigaid summary'),dots(1129,1888),[1897,13,wb('f')],[1912,13,wb('x')]]);
{const half='<svg class="shrink-0" width="15" height="14"><circle cx="7.500" cy="7" r="6.500" fill="#0a8cff"/><path d="M1 7a6.500 6.500 0 0 0 13 0z" fill="#f00"/></svg>';
const ring='<svg class="shrink-0" width="15" height="14"><circle cx="7.500" cy="7" r="5.500" fill="#fff" stroke="#1f9cff" stroke-width="2"/></svg>';
const tabs=[[104,'',81,'Project summary'],[102,half,58,'EP summary'],[102,half,59,'EA summary'],[107,ring,63,'WR summary',1],[113,'',69,'WDS summary',0,18],[107,'',66,'DSV summary',0,18]];
document.querySelector('[data-tabs]').innerHTML=tabs.map(([w,i,tw,s,a,p])=>`<div class="shrink-0 box-border border border-b-0 border-[#a9a9a9] rounded-t-[3px] flex items-center justify-center gap-[4px] ${a?'h-[24px] bg-[#efefef]':'h-[20px] bg-gradient-to-b from-[#eee] to-[#d8d8d8] border-l-0'}" style="width:${w}px;padding-left:${p||0}px">${i}<span data-w="${tw}">${s}</span></div>`).join('');
const H=['ID','DESC','NOTES','PER','AREA','SP','MP','TYP','MP_USER','CAP','COLLECTED','COST'];
const R=[['1.0','None','None','82.66','348.33','3.4','3.49','tank1','3.49','1000.0','33.52','10000.0'],['2.0','None','None','68.32','289.01','3.47','3.49','green_roof_01','3.49','2.89','2.89','289.01'],['3.0','None','None','256.98','3619.48','3.31','4.04','basin','4.04','1676.44','','3352.88']];
const c=['<path d="M1.500 7a5.500 5.500 0 0 0 11 0z" fill="#0a8cff"/>','<circle cx="7" cy="7" r="6" fill="#0a8cff"/>',''];
let h='<div class="bg-[#efefef] h-[21px] flex"><div class="w-[27px] border-r-2 border-b-2 border-[#8a8a8a] bg-gradient-to-b from-white to-[#e2e2e2]"></div>'+H.map(x=>`<div class="w-[100px] border-r-2 border-y-2 border-[#8a8a8a] bg-gradient-to-b from-white to-[#e2e2e2] flex items-center justify-center">${F(x)}</div>`).join('')+'</div><div class="flex h-[220px]"><div class="w-[27px] bg-[#efefef]">'+c.map(x=>`<div class="h-[30px] border-b-2 border-r border-[#8a8a8a] bg-gradient-to-r from-white to-[#e2e2e2] flex items-center justify-center"><svg width="14" height="14"><circle cx="7" cy="7" r="5.500" fill="#fff" stroke="#0a8cff" stroke-width="1.500"/>${x}</svg></div>`).join('')+'</div><div>';
R.forEach((r,i)=>{h+=`<div class="flex h-[30px] ${i==1?'bg-[#f6f6f6]':''}">`+r.map((v,j)=>`<div class="w-[100px] border-r border-b border-[#999] flex items-center px-[3px] ${j>2?'justify-end':''}">${F(v)}</div>`).join('')+'</div>'});
document.getElementById('table').innerHTML=h+'</div></div>'}

/* bottom toolbar */
const spin=(a,b,v)=>[(a+b)/2,b-a,`<span class="w-full h-[19px] border border-[#b0b0b0] rounded-[2px] bg-white flex items-center pl-[3px]">${F(v)}<span class="ml-auto w-[15px] h-full border-l border-[#c5c5c5] bg-gradient-to-b from-white to-[#e6e6e6] flex flex-col items-center justify-around"><svg width="7" height="5"><path d="M0 5h7L3.500 0z"/></svg><svg width="7" height="5"><path d="M0 0h7L3.500 5z"/></svg></span></span>`];
const combo=(a,b,v)=>[(a+b)/2,b-a,`<span class="w-full h-[19px] border border-[#b0b0b0] rounded-[2px] bg-white flex items-center pl-[4px]">${F(v)}<span class="ml-auto w-[15px] h-full border-l border-[#c5c5c5] bg-gradient-to-b from-white to-[#e6e6e6] flex items-center justify-center"><svg width="7" height="5"><path d="M0 0h7L3.500 5z"/></svg></span></span>`];
const dk=(a,b,s,w)=>[(a+b)/2,b-a,`<span class="w-full h-[19px] bg-gradient-to-r from-[#555] to-[#a5a5a5] text-white flex items-center pl-[2px] gap-[7px]"><span class="size-[8px] rounded-full bg-white shrink-0"></span><span data-w="${w}">${s}</span></span>`];
strip('q-bottom',0,[hd(8),...[27.500,62.500,94,127,160,193,226.500,259,293,324.500,357.500,391].map((x,i)=>icon(x,'b'+(i+1))),hd(419),icon(438,'b13'),icon(471.500,'b14'),dk(488,546,'RGB =',32),combo(547,626,'-'),icon(644,'b15'),icon(677,'b16'),icon(710,'b17'),dk(727,785,'ROI',20),icon(802,'b18'),icon(835,'b19'),icon(868,'b20'),T(887,905,'Dist'),spin(907,1006,'0.010000'),T(1010,1026,'Min'),spin(1028,1087,'60'),T(1091,1111,'Max'),spin(1113,1172,'100'),icon(1190,'b23'),dk(1207,1272,'Preview',39),icon(1289,'b21'),icon(1322,'b20'),[1344,7,'T'],spin(1349,1399,'0'),[1405,7,'S'],spin(1411,1469,'200'),icon(1487.500,'b22'),hd(1514),...[1535,1570,1605,1640,1675,1711,1746,1781,1815].map((x,i)=>icon(x,'h'+(i+1)))]);
strip('q-status',0,[T(6,202,'1 feature(s) selected on layer WDS lines.'),T(549,708,'There is a plugin update available','underline text-[#0000ee]'),T(951,1004,'Coordinate'),[1123.500,229,'<span class="w-full h-[19px] border border-[#b0b0b0] rounded-[2px] bg-white flex items-center justify-center"><span data-w="107">1759625.9,5054535.6</span></span>'],icon(1251,'mouse',16),T(1273,1299,'Scale'),combo(1302,1390,'1:1,747'),icon(1404,'lock',16),T(1425,1469,'Magnifier'),spin(1474,1550,'100%'),T(1558,1599,'Rotation'),spin(1609,1685,'0.0'),[1698,12,'<span class="size-[12px] border border-[#bbb] bg-white flex items-center justify-center"><svg width="9" height="9"><path d="M1 1l7 7M8 1L1 8" stroke="#000" stroke-width="2.500"/></svg></span>'],T(1709,1744,'Render'),icon(1771,'proj',15),T(1783,1866,'EPSG:3003 (OTF)'),icon(1897,'msg',16)]);

/* ---------- Word ---------- */
const sep=c=>[c,1,'<span class="w-px h-[18px] bg-[#c9ced4]"></span>'];
const ch=(c,s,cls,w=16)=>[c,w,`<span class="${cls}">${s}</span>`];
strip('w-title',1920,[icon(1929,'wW',16),sep(1944),icon(1956.500,'wsave',14),icon(1978.500,'wundo',14),dn(1992.500,5),icon(2010,'wredo',13),ch(2032,'Ω','text-[17px] text-[#2c62b5] font-bold'),dn(2045,5),sep(2054.500),dn(2062.500,6),T(2748,3012,'Il Toolkit Method BRIGAID.docx  -  Microsoft Word','text-[#111] [text-shadow:0_0_7px_#fff,0_0_5px_#ddd]'),[3785.500,103,'<span class="w-full h-[18px] -mt-[5px] border border-t-0 border-[#b8bdc2] rounded-b-[4px] flex text-white text-[12px] font-bold"><span class="w-[28px] flex items-center justify-center"><span class="w-[11px] h-[4px] bg-white border border-[#444] mt-[5px]"></span></span><span class="w-[27px] border-x border-[#9aa] flex items-center justify-center"><span class="size-[10px] border-2 border-white"></span></span><span class="flex-1 flex items-center justify-center">✕</span></span>']]);
strip('w-tabs',1920,[[1948,55,'<span class="w-full h-[24px] rounded-t-[3px] border border-[#1a3f83] bg-gradient-to-b from-[#3a6fc4] to-[#1d4fa5] text-white flex items-center justify-center"><span data-w="18">File</span></span>'],[2008,56,'<span class="w-full h-[25px] rounded-t-[3px] border border-b-0 border-[#b5bac0] bg-white flex items-center justify-center"><span data-w="30">Home</span></span>'],T(2051,2092,'Inserisci'),T(2120,2205,'Layout di pagina'),T(2234,2290,'Riferimenti'),T(2318,2353,'Lettere'),T(2381,2430,'Revisione'),T(2458,2508,'Visualizza'),T(2536,2555,'PDF'),ch(3808,'⌃','text-[14px] font-bold text-[#222]',10),[3828,15,'<span class="size-[15px] rounded-full bg-[#2f6fd0] border border-[#cde] text-white font-bold text-[11px] flex items-center justify-center">?</span>']]);
const se="font-['Liberation_Serif'] ";
strip('w-f1',2069,[[2145.500,141,'<span class="w-full h-[22px] border border-[#c3c8ce] bg-white flex items-center text-[#222]"><span class="ml-[3px] flex"><span data-w="24">Arial</span></span><svg class="ml-auto mr-[5px]" width="5" height="4"><path d="M0 0h5L2.500 3.500z"/></svg><span class="w-px h-full bg-[#c3c8ce]"></span><span class="ml-[3px] flex"><span data-w="13">12</span></span><svg class="ml-[18px] mr-[5px]" width="5" height="4"><path d="M0 0h5L2.500 3.500z"/></svg></span>'],ch(2228,'A<sup class="text-[6px] text-[#25a]">▲</sup>',se+'text-[17px] text-[#333] font-bold',18),ch(2250,'A<sup class="text-[6px] text-[#25a]">▼</sup>',se+'text-[14px] text-[#333] font-bold',18),sep(2264),ch(2283,'Aa',se+'text-[15px] text-[#222] font-bold',20),dn(2295,4),sep(2305),icon(2323,'erase',18)]);
strip('w-f2',2069,[ch(2086,'G','font-bold text-black'),ch(2110,'C',se+'italic text-[14px]'),ch(2134,'S',se+'font-bold underline text-[14px] text-black'),dn(2150,4),ch(2169,'abc','line-through text-[11px] text-black',20),ch(2192,'x<sub class="text-[8px] text-[#25a]">2</sub>','font-bold text-black'),ch(2216,'x<sup class="text-[8px] text-[#25a]">2</sup>','font-bold text-black'),sep(2231.500),ch(2247,'A',se+'text-[19px] text-[#d8ecfa] font-bold [-webkit-text-stroke:1px_#5aa9dd]'),dn(2260,4),ch(2278.500,'ab','text-[10px] font-bold text-black bg-[#f5ee5a] border-b-4 border-[#ddd] px-[1px]'),dn(2295,4),ch(2313.500,'A',se+'text-[15px] text-[#25508f] font-bold border-b-4 border-[#f00] px-[3px]'),dn(2328,4)]);
const hot=n=>`<span class="w-[23px] h-[22px] border border-[#c9922a] rounded-[2px] bg-gradient-to-b from-[#fbe08a] to-[#ffd35a] flex items-center justify-center shrink-0 text-black">${n}</span>`;
strip('w-p1',2339,[icon(2355,'bul',15),dn(2371,4),icon(2390,'num',15),dn(2406,4),icon(2425,'ml',15),dn(2437,4),sep(2449),icon(2464,'ind',15),icon(2487,'ind2',15),sep(2499),icon(2518,'az',15),sep(2530),[2551,23,hot('<b class="font-[\'Liberation_Serif\'] text-[15px]">¶</b>')]]);
strip('w-p2',2339,[[2355.500,23,hot(ic('al',15))],icon(2379,'ac',15),icon(2403,'ar',15),icon(2426,'aj',15),sep(2441),icon(2459,'lsp',15),dn(2471,4),sep(2481),icon(2500,'buck',15),dn(2515,4),sep(2524),icon(2533,'bord',15),dn(2548,4)]);
{const S=[['AaBbCcDdI',se+'font-bold text-[#4f81bd] text-[13px]','¶ Didascalia',60],['AaBbCcI',se+'italic text-black text-[16px]','Enfasi (cor…',61],['AaBbCcl',se+'font-bold text-black text-[16px]','Enfasi (gr…',57],['AaBbCcI',se+'text-black text-[16px]','¶ Normale',51],['AaBbCc.',se+'italic text-[#4f81bd] text-[16px]','Sottotitolo',55],['AaB',"font-['Liberation_Serif'] text-[#17365d] text-[30px]",'Titolo',29],['AaBbCı',se+'font-bold text-[#365f91] text-[18px]','Titolo 1',37],['AaBbCcI',se+'text-black text-[16px]','¶ Nessuna…',61],['AaBbCcI',se+'italic text-[#808080] text-[16px]','Enfasi deli…',61],['AaBbCcl',se+'italic font-bold text-[#4f81bd] text-[16px]','Enfasi int…',56],['AaBbCcI',se+'italic text-black text-[16px]','Citazione',48],['AaBbCcl',se+'italic font-bold text-[#4f81bd] text-[16px] border-b-2 border-[#4f81bd]','Citazione …',59],['AABBCC:',se+'text-[#c0504d] text-[15px] underline','Riferiment…',61],['AABBCC',se+'font-bold text-[#c0504d] text-[15px] underline','Riferiment…',61],['AABBCC',se+'font-bold text-black text-[15px]','Titolo del …',59]];
document.getElementById('styles').innerHTML=S.map(([a,c,n,w],i)=>`<div class="w-[72px] shrink-0 flex flex-col items-center text-[#333] ${i==3?'border-2 border-[#c9922a] outline-2 -outline-offset-4 outline-[#fbd67a] my-[1px]':'my-[1px] border-2 border-transparent'}"><div class="h-[36px] flex items-center"><span class="${c}" data-w="59">${a}</span></div><div class="flex"><span data-w="${w}">${n}</span></div></div>`).join('')+'<div class="flex-1 border-l border-[#c3c8ce] flex flex-col text-[7px] text-[#555]"><span class="flex-1 flex items-center justify-center text-[#bbb]">▲</span><span class="flex-1 border-y border-[#c3c8ce] flex items-center justify-center">▼</span><span class="flex-1 flex items-center justify-center"><u class="no-underline border-t border-[#555] pt-[1px]">▼</u></span></div>'}

/* document body: [centre y, indent, width, text, class] */
{const L=[[162.500,0,623,'dei collegamenti tra gli EP o EA e le zone di smaltimento. Il tasto WD (Water Discharge '],[190,0,641,'System) consente di editare lo shapefile lineare delle WDS: praticamente l’utente progetta '],[218.500,0,616,'dove far smaltire l’acqua accumulata. Una volta attivato questo comando l’utente potrà '],[246,0,607,'disegnare il tracciato lineare da dentro una area EA (o EP) fino a dentro un perimetro '],[273.500,0,638,'WAT_REC e il plugin effettuerà i calcoli del bilanciamento idrico “spostando” virtualmente '],[300.500,0,317,'le masse di acqua verso i corpi recettori.  In ¶'],'fig',[711,0,606,'Figura 14: Finestra per la definizione delle caratteristiche dei tubi di collegamento per '],[729,0,212,'spostare le masse di acqua. ¶'],[756,0,635,'Il plugin prevede la possibilità di non disegnare i corpi idrici a capacità infinita: nel caso in '],[782.500,0,611,'cui sia presente un fiume o un mare in grado di ricevere quantità illimitate di acqua: in '],[810.500,0,646,'questo caso si può disegnare una linea WD che finisce nel corpo d’acqua ricevente, senza '],[838.500,0,194,'la necessità di disegnarlo.¶'],[874,0,9,'¶'],[910.500,0,9,'¶'],[956,24,9,'¶'],[997.500,24,56,'5.→DS¶','font-bold']];
let y=141,h='';
L.forEach(r=>{if(r=='fig'){h+=`<div class="flex items-end shrink-0" style="margin-top:${(327-y).toFixed(1)}px;height:364px"><svg class="ml-[26px] w-[622px] h-[364px] border border-black bg-[#efefef]" viewBox="2780 327 622 364" id="fig"></svg><span class="ml-[3px] -mb-[3px]">¶</span></div>`;y=691;return}
h+=`<div class="h-[16px] shrink-0 flex ${r[4]||''}" style="margin-top:${(r[0]-8-y).toFixed(1)}px;padding-left:${r[1]}px"><span data-w="${r[2]}">${r[3].replace(/ /g,'·')}</span></div>`;y=r[0]+8});
document.getElementById('doc').innerHTML=h;
/* figure: positions are in the figure's own grid */
const x=a=>(2650+a*.57398).toFixed(1),yy=b=>(130+b*.3699).toFixed(1);
const t=(s,a,b,w,f,c,an)=>`<text x="${x(a)}" y="${(+yy(b)+2.400).toFixed(1)}" font-size="${f}" fill="${c||'#222'}" text-anchor="${an||'start'}" textLength="${w}" lengthAdjust="spacingAndGlyphs">${s}</text>`;
const r=(a,b,a2,b2,fill,st)=>`<rect x="${x(a)}" y="${yy(b)}" width="${((a2-a)*.57398).toFixed(1)}" height="${((b2-b)*.3699).toFixed(1)}" fill="${fill}" ${st||''}/>`;
const im=(n,a,b)=>`<svg x="${x(a-12)}" y="${(+yy(b)-6.500).toFixed(1)}" width="13" height="13" viewBox="0 0 24 24">${I[n]}</svg>`;
let g='<defs><linearGradient id="tg" x2="0" y2="1"><stop stop-color="#10161c"/><stop offset="1" stop-color="#b9cade"/></linearGradient><linearGradient id="dg" x2="0" y2="1"><stop stop-color="#9aa9d0"/><stop offset=".3" stop-color="#6a78b8"/><stop offset=".5" stop-color="#59647c"/><stop offset="1" stop-color="#3d4d5c"/></linearGradient><filter id="ds" x="-20%" y="-20%" width="140%" height="140%"><feDropShadow dx="0" dy="1" stdDeviation="4" flood-opacity=".7"/></filter><clipPath id="cp"><rect x="2780" y="416" width="622" height="275"/></clipPath></defs>'+r(226,533,1309,567,'url(#tg)')+`<g fill="#b9b9b9">${r(226,567,1309,569,'#888')}${r(226,598,1309,601,'#c8c8c8')}${r(226,654,1309,657,'#c8c8c8')}${r(226,711,1309,714,'#c8c8c8')}</g>`;
g+=t('b',226,586,3,7)+t('SCP',245,586,10.500,7)+t('Processing',276,586,28,7)+t('Help',338,586,12,7);
['zfull','zsel','zlay','zprev','znext','bknew','bk','refresh'].forEach((n,i)=>g+=im(n,247+i*32.500,628));g+=im('crop',521,628)+im('help',567,628)+im('cad',612,628);
['e9','e10','e11','e12','e13','e14'].forEach((n,i)=>g+=im(n,232+i*33,684));
g+='<g clip-path="url(#cp)"><use href="#map" transform="translate(2548.200 327.300) scale(.5326 .537)"/></g>';
for(let i=0;i<9;i++){const q=+x(1184-i*7.500),v=+yy(1071-i*.500);g+=`<path d="M${q} ${v}h-5M${q-4} ${v}l3-3.500M${q-4} ${v}l3 3.500" stroke="#ff0" stroke-width="1.500" fill="none"/>`}
g+=r(888,898,955,949,'#efefef')+r(890,902,920,946,'#d5d5d5','stroke="#777" stroke-width=".500"')+im('f9',905,922)+im('f10',937,922);
g+=r(553,776,885,1497,'url(#dg)','rx="3" stroke="#1c2530" stroke-width=".800" filter="url(#ds)"')+r(560,820,879,1490,'#efefef','stroke="#555" stroke-width=".500"')+im('leaf',571,796)+t('Water discharge system (WDS) parameters',578,798,122,7.500)+r(809,777,835,803,'#8f99c0','stroke="#445" stroke-width=".500"')+r(835,777,879,803,'#cc3c28','stroke="#445" stroke-width=".500"')+t('x',853,790,5,8,'#fff')+t('?',819,790,4,8,'#fff');
g+=r(563,852,876,1446,'none','stroke="#c4c4c4"')+r(563,825,628,853,'#efefef','stroke="#c4c4c4"')+t('unit detail',572,840,26,7);
const V=['2','None','None','lead to water repository','tipo x','pump','2','NULL','1','34.3386085991','11.9718103815','NULL','1000.0','3.47411608696','NULL','3.48579001427','10171.693043'];const VW=[3,14,14,63,15,15,3,13,3,44,44,13,18,44,13,44,39];
D.forEach((d,i)=>{const c=881+i*33.400,w=i==1||i==2;g+=r(731,c-13,i==4?781:865,c+13,w||i==3||i==4?'#fcfcfc':'#efefef',`stroke="${w?'#bbb':'#aaa'}" stroke-width=".900" rx="1"`)+t(V[i],734,c+1,VW[i],6.500,i>0&&i<5?'#222':'#888');if(d[0])g+=t(d[0],727,c+1,d[1]*.54,6.500,'#222','end');if(i==3||i==4){const q=+x(i==3?857:774);g+=`<path d="M${q-3} ${+yy(c)-1.500}h5l-2.500 3.500z"/>`}if(w){const q=+x(853);g+=`<path d="M${q-4} ${+yy(c)}l2-2.500h5v5h-5z" fill="#888"/>`}});
g+=r(727,1450,795,1481,'#f6f6f6','stroke="#888" stroke-width=".800"')+r(807,1450,875,1481,'#f6f6f6','stroke="#bbb" stroke-width=".800"')+t('OK',753,1467,8,7)+t('Cancel',824,1467,18,7);
document.getElementById('fig').innerHTML=g}

strip('w-status',1920,[T(1928,2009,'Pagina: 11 di 12'),sep(2018),T(2028,2092,'Parole: 1,921'),sep(2102.500),icon(2119,'book',16),T(2143,2216,'Italiano (Italia)'),sep(2265),sep(3562.500),[3576.500,18,`<span class="size-[18px] border border-[#c9922a] rounded-[2px] bg-[#fde28c] flex items-center justify-center">${ic('s1',12)}</span>`],icon(3595,'s2',12),icon(3613,'s3',12),icon(3631.500,'s4',10),icon(3650,'s5',10),T(3669,3696,'100%'),[3712,15,'<span class="size-[15px] rounded-full border border-[#777] bg-[#f4f4f4] flex items-center justify-center"><span class="w-[8px] h-[2px] bg-[#444]"></span></span>'],[3770,101,'<svg width="101" height="16"><path d="M0 7.500h101" stroke="#8a9099"/><path d="M46.500 1.500h8v8l-4 4-4-4z" fill="#fff" stroke="#666"/></svg>'],[3828,15,'<span class="size-[15px] rounded-full border border-[#777] bg-[#f4f4f4] flex items-center justify-center"><svg width="9" height="9"><path d="M4.500 0v9M0 4.500h9" stroke="#444" stroke-width="2"/></svg></span>']]);
const tb=(c,n,on,s=28)=>[c,57,`<span class="w-full h-[37px] rounded-[2px] border ${on?'border-[#e2e6e8] bg-gradient-to-br from-[#8b9090] to-[#c9cccc]':'border-[#8a9196] bg-gradient-to-b from-[#5c6267] to-[#23282c]'} flex items-center justify-center">${ic(n,s)}</span>`];
strip('task',1920,[icon(1947,'win',35),tb(2009,'fold'),icon(2070,'wmp',26),icon(2133,'chrome',30),tb(2194,'ie',0,30),icon(2257,'fox',30),tb(2319,'boxi',0,32),tb(2381,'outl'),tb(2443,'pict'),tb(2505,'cab'),tb(2567,'qg',1,30),tb(2629,'wd'),T(3553,3563,'IT'),[3586,8,'<svg width="8" height="5"><path d="M0 5h8L4 0z" fill="#eee"/></svg>'],icon(3610,'t1',14),icon(3634,'t2',13),icon(3658,'t3',14),icon(3682,'t4',16),icon(3706,'t5',15),icon(3730,'t6',15),[3785,60,'<span class="flex flex-col gap-[5px]"><span class="flex justify-center"><span data-w="27">14:35</span></span><span class="flex justify-center"><span data-w="58">30/04/2019</span></span></span>'],[3832,13,'<span class="w-full h-[37px] border border-[#777] bg-gradient-to-b from-[#555] to-[#15181a]"></span>']]);

/* each label is condensed or widened to the width in its data-w; this waits until the stylesheet applies */
const fitLabels=()=>{
  if(getComputedStyle(document.body).display!=='flex'){setTimeout(fitLabels,10);return}
  const fit=[...document.querySelectorAll('[data-w]')].map(e=>{const r=document.createRange();r.selectNodeContents(e);return [e,+e.dataset.w,r.getBoundingClientRect().width]});
  fit.forEach(([e,w,n])=>{if(!w||!n)return;e.classList.add('block','shrink-0','origin-left','whitespace-nowrap','text-left');e.style.width=n.toFixed(2)+'px';e.style.marginRight=(w-n).toFixed(2)+'px';e.style.transform=`scaleX(${(w/n).toFixed(4)})`});
};
fitLabels();
</script>
</body>
</html>
